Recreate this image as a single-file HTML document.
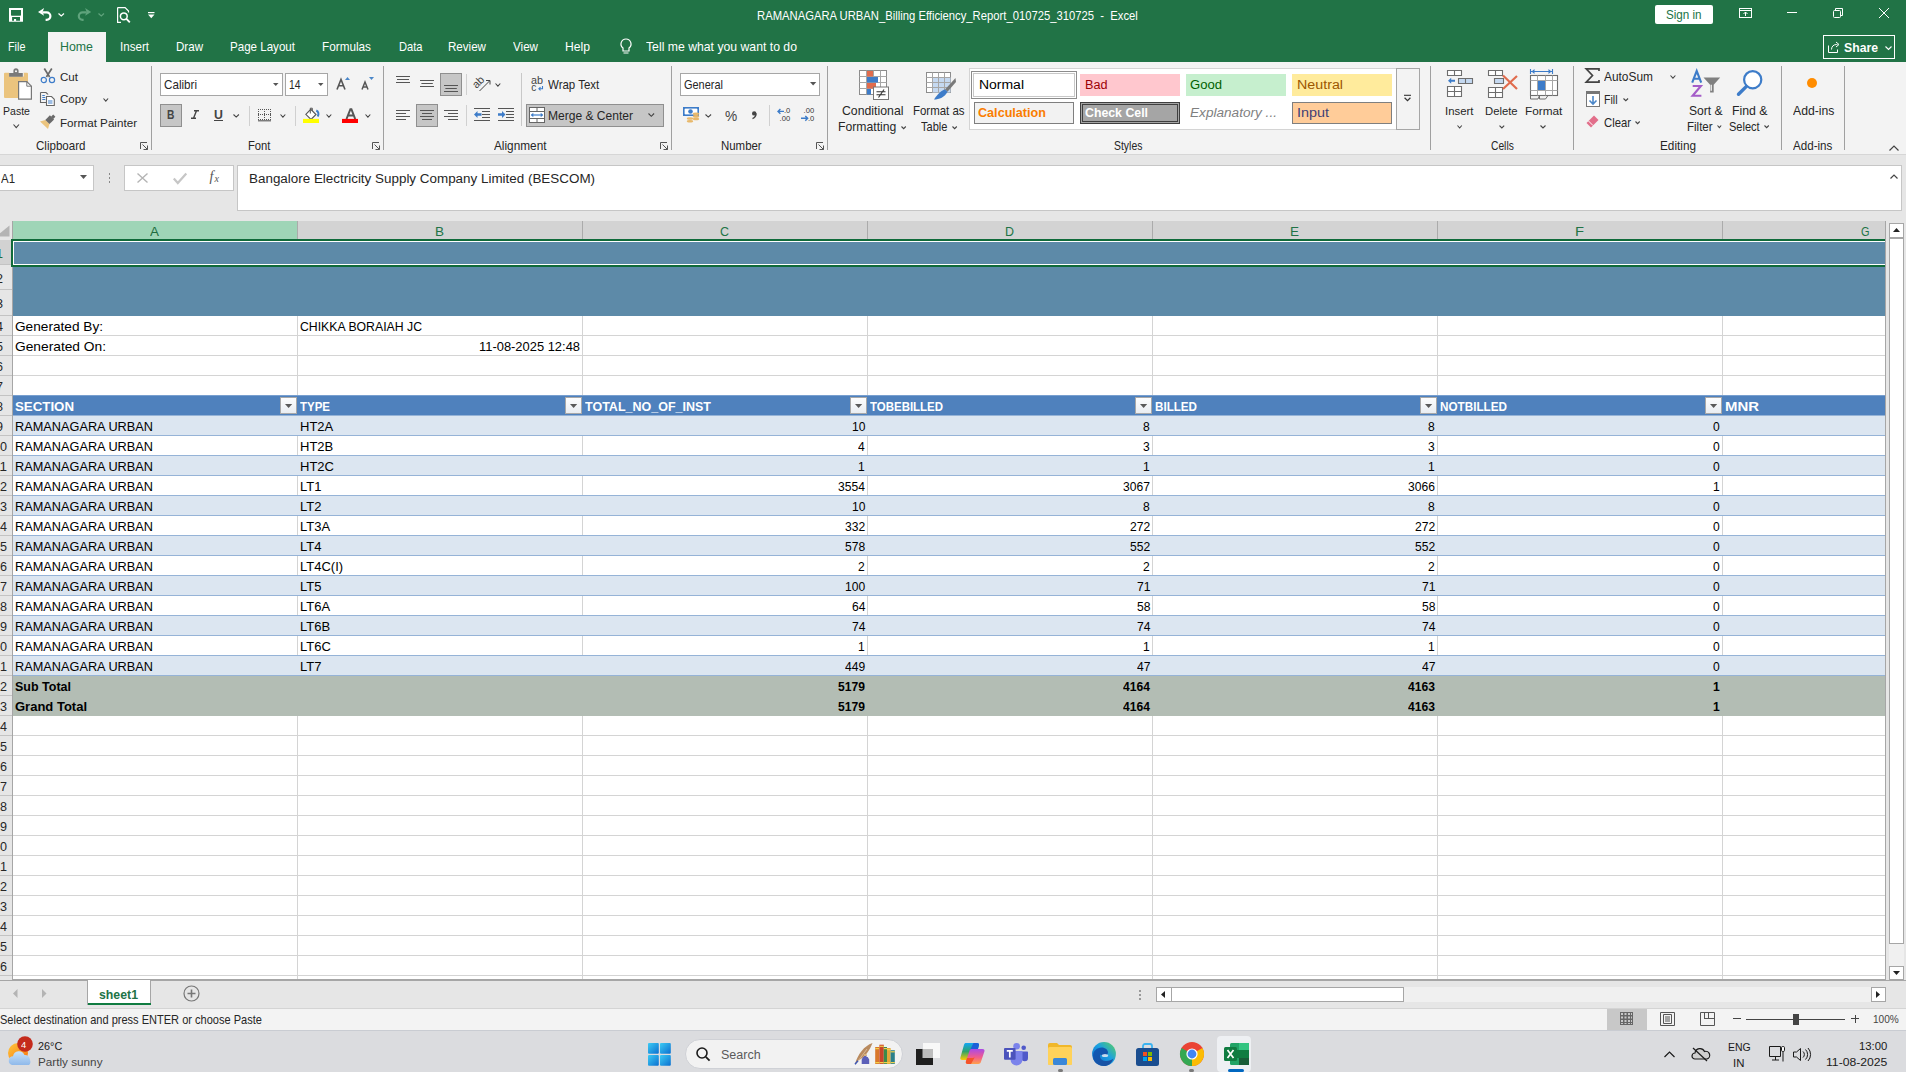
<!DOCTYPE html>
<html><head><meta charset="utf-8"><style>
*{margin:0;padding:0;box-sizing:border-box}
html,body{width:1906px;height:1072px;overflow:hidden;background:#fff;font-family:"Liberation Sans",sans-serif;color:#000}
.a{position:absolute}
.t{position:absolute;white-space:nowrap;line-height:1}
svg{overflow:visible}
</style></head><body>
<div class="a" style="left:0px;top:0px;width:1906px;height:62px;background:#217346;"></div>
<div class="a" style="left:0px;top:62px;width:1906px;height:92px;background:#f3f3f3;"></div>
<div class="a" style="left:0px;top:154px;width:1906px;height:1px;background:#d6d6d6;"></div>
<div class="a" style="left:0px;top:155px;width:1906px;height:66px;background:#e6e6e6;"></div>
<svg class="a" style="left:9px;top:8px;" width="14" height="14" viewBox="0 0 14 14"><path d="M0 0h14v13.8H0z M2 2v4.8c0 0.6 0.4 1 1 1h8c0.6 0 1-0.4 1-1V2z M3.1 9.1v3.6h1.9v-1.6h2.1v1.6h3.9V9.1z" fill="#fff" fill-rule="evenodd"/></svg>
<svg class="a" style="left:37.9px;top:8px;" width="15" height="14" viewBox="0 0 15 14"><path d="M0 4.1L6.1 0L4.6 4.1L6.1 7.8z" fill="#fff"/><path d="M4.5 4.3h4.1a3.8 3.8 0 0 1 0 7.6H7.6" fill="none" stroke="#fff" stroke-width="2.2"/></svg>
<svg class="a" style="left:58.4px;top:13px;" width="6.5" height="3.5" viewBox="0 0 6.5 3.5"><path d="M0.5 0.5L3.25 3L6 0.5" fill="none" stroke="#fff" stroke-width="1.2"/></svg>
<svg class="a" style="left:77px;top:8px;" width="15" height="14" viewBox="0 0 15 14"><path d="M14.2 4.1L8.1 0L9.6 4.1L8.1 7.8z" fill="#5fa37c"/><path d="M9.7 4.3H5.6a3.8 3.8 0 0 0 0 7.6h1" fill="none" stroke="#5fa37c" stroke-width="2.2"/></svg>
<svg class="a" style="left:97.5px;top:13px;" width="6.5" height="3.5" viewBox="0 0 6.5 3.5"><path d="M0.5 0.5L3.25 3L6 0.5" fill="none" stroke="#5fa37c" stroke-width="1.2"/></svg>
<svg class="a" style="left:117px;top:7px;" width="14" height="16" viewBox="0 0 14 16"><path d="M0.6 0.6h7.5l3.4 3.4v1.5 M0.6 0.6v14.8h3.4" fill="none" stroke="#fff" stroke-width="1.2"/><circle cx="6.8" cy="9.3" r="3.4" fill="none" stroke="#fff" stroke-width="1.5"/><path d="M9.2 11.7l3.6 3.6" stroke="#fff" stroke-width="1.9"/></svg>
<svg class="a" style="left:148.3px;top:11.8px;" width="6.5" height="6.5" viewBox="0 0 6.5 6.5"><path d="M0 0.6h6.5" stroke="#fff" stroke-width="1.2"/><path d="M0 2.6h6.5L3.25 6.2z" fill="#fff"/></svg>
<div class="t" style="left:757px;top:11px;font-size:11.85px;color:#fff;font-weight:normal;transform:scaleX(0.9504);transform-origin:0 0;">RAMANAGARA URBAN_Billing Efficiency_Report_010725_310725&nbsp;&nbsp;-&nbsp;&nbsp;Excel</div>
<div class="a" style="left:1655px;top:5px;width:58px;height:19px;background:#fff;border-radius:2px"></div>
<div class="t" style="left:1665.8px;top:9px;font-size:12.85px;color:#217346;font-weight:normal;transform:scaleX(0.9061);transform-origin:0 0;">Sign in</div>
<svg class="a" style="left:1739px;top:8px;" width="13" height="10" viewBox="0 0 13 10"><rect x="0.5" y="0.5" width="12" height="9" fill="none" stroke="#fff"/><path d="M0.5 2.5h12 M6.5 8V4 M4.5 6l2-2 2 2" fill="none" stroke="#fff"/></svg>
<div class="a" style="left:1787px;top:12px;width:10px;height:1px;background:#fff;"></div>
<svg class="a" style="left:1833px;top:8px;" width="10" height="10" viewBox="0 0 10 10"><rect x="0.5" y="2.5" width="7" height="7" rx="1" fill="none" stroke="#fff"/><path d="M2.5 2V0.5h7v7H8" fill="none" stroke="#fff"/></svg>
<svg class="a" style="left:1879px;top:8px;" width="10" height="10" viewBox="0 0 10 10"><path d="M0 0l10 10 M10 0L0 10" stroke="#fff" stroke-width="1"/></svg>
<div class="a" style="left:48px;top:32px;width:58px;height:30px;background:#f3f3f3;"></div>
<div class="t" style="left:7.6px;top:41px;font-size:12.55px;color:#fff;font-weight:normal;transform:scaleX(0.8605);transform-origin:0 0;">File</div>
<div class="t" style="left:60px;top:41px;font-size:12.55px;color:#217346;font-weight:normal;transform:scaleX(0.9858);transform-origin:0 0;">Home</div>
<div class="t" style="left:120px;top:41px;font-size:12.55px;color:#fff;font-weight:normal;transform:scaleX(0.9240);transform-origin:0 0;">Insert</div>
<div class="t" style="left:176px;top:41px;font-size:12.55px;color:#fff;font-weight:normal;transform:scaleX(0.9220);transform-origin:0 0;">Draw</div>
<div class="t" style="left:230px;top:41px;font-size:12.55px;color:#fff;font-weight:normal;transform:scaleX(0.9223);transform-origin:0 0;">Page Layout</div>
<div class="t" style="left:322px;top:41px;font-size:12.55px;color:#fff;font-weight:normal;transform:scaleX(0.9369);transform-origin:0 0;">Formulas</div>
<div class="t" style="left:398.5px;top:41px;font-size:12.55px;color:#fff;font-weight:normal;transform:scaleX(0.8865);transform-origin:0 0;">Data</div>
<div class="t" style="left:448px;top:41px;font-size:12.55px;color:#fff;font-weight:normal;transform:scaleX(0.9235);transform-origin:0 0;">Review</div>
<div class="t" style="left:513px;top:41px;font-size:12.55px;color:#fff;font-weight:normal;transform:scaleX(0.9268);transform-origin:0 0;">View</div>
<div class="t" style="left:565px;top:41px;font-size:12.55px;color:#fff;font-weight:normal;transform:scaleX(0.9686);transform-origin:0 0;">Help</div>
<svg class="a" style="left:620px;top:38px;" width="12" height="17" viewBox="0 0 12 17"><path d="M6 1a5 5 0 0 0-3 9v3h6v-3a5 5 0 0 0-3-9z M3.5 15h5" fill="none" stroke="#fff" stroke-width="1.2"/></svg>
<div class="t" style="left:646px;top:41px;font-size:12.55px;color:#fff;font-weight:normal;transform:scaleX(0.9751);transform-origin:0 0;">Tell me what you want to do</div>
<div class="a" style="left:1823px;top:35px;width:72px;height:24px;border:1px solid #fff"></div>
<svg class="a" style="left:1828px;top:41px;" width="12" height="12" viewBox="0 0 12 12"><path d="M0.5 4.5v7h9v-3 M3.5 8.5c0-3 2-5 5-5h1 M8 1l3 2.5L8 6" fill="none" stroke="#fff" stroke-width="1"/></svg>
<div class="t" style="left:1844px;top:42px;font-size:12.55px;color:#fff;font-weight:bold;transform:scaleX(0.9748);transform-origin:0 0;">Share</div>
<svg class="a" style="left:1884.5px;top:45.5px;" width="7" height="4" viewBox="0 0 7 4"><path d="M0.5 0.5 L3.5 3.5 L6.5 0.5" fill="none" stroke="#fff" stroke-width="1.1"/></svg>
<svg class="a" style="left:0px;top:64px;" width="34" height="38" viewBox="0 0 34 38"><path d="M5 8.8h4v3.8h14.8V8.8H27a1 1 0 0 1 1 1V34H5a1 1 0 0 1-1-1V9.8a1 1 0 0 1 1-1z" fill="#ebc47e"/><path d="M9.1 9.1h4.3V6.8a2.6 2.6 0 0 1 5.2 0v2.3h4.2v3.6H9.1z" fill="#7a7a7a"/><circle cx="16" cy="7.2" r="1" fill="#fff"/><path d="M18.6 17.6h8.2l4.6 4.6v12.9H18.6z" fill="#fff" stroke="#777" stroke-width="1.2"/><path d="M26.8 17.6v4.6h4.6" fill="none" stroke="#777" stroke-width="1"/></svg>
<div class="t" style="left:3px;top:106px;font-size:11.45px;color:#262626;font-weight:normal;transform:scaleX(0.9222);transform-origin:0 0;">Paste</div>
<svg class="a" style="left:12.5px;top:124px;" width="6.5" height="4" viewBox="0 0 6.5 4"><path d="M0.5 0.5 L3.25 3.7 L6.0 0.5" fill="none" stroke="#444" stroke-width="1.1"/></svg>
<svg class="a" style="left:40px;top:67px;" width="16" height="17" viewBox="0 0 16 17"><path d="M4.3 1.5L9.6 10 M11.8 1.5L6.4 10" stroke="#6a6a6a" stroke-width="1.7"/><circle cx="3.8" cy="13" r="2.6" fill="none" stroke="#3d7cc9" stroke-width="1.2"/><circle cx="12" cy="13" r="2.6" fill="none" stroke="#3d7cc9" stroke-width="1.2"/></svg>
<div class="t" style="left:59.7px;top:71px;font-size:11.75px;color:#262626;font-weight:normal;transform:scaleX(0.9845);transform-origin:0 0;">Cut</div>
<svg class="a" style="left:40px;top:92px;" width="16" height="14" viewBox="0 0 16 14"><path d="M0.5 0.5h5.5l1.8 1.8V2.6 M0.5 0.5v10h5.5" fill="none" stroke="#666" stroke-width="1.1"/><path d="M6.5 4.5h5l2.8 2.8v6.2H6.5z" fill="#fff" stroke="#666" stroke-width="1.1"/><path d="M2.3 3.5h2.5 M2.3 5.5h3 M2.3 7.5h3 M8 9h4.5 M8 11h4.5" stroke="#3d7cc9" stroke-width="1"/></svg>
<div class="t" style="left:59.7px;top:93px;font-size:11.75px;color:#262626;font-weight:normal;transform:scaleX(0.9844);transform-origin:0 0;">Copy</div>
<svg class="a" style="left:102.6px;top:98px;" width="5.6" height="3.5" viewBox="0 0 5.6 3.5"><path d="M0.5 0.5 L2.8 3.2 L5.1 0.5" fill="none" stroke="#444" stroke-width="1.1"/></svg>
<svg class="a" style="left:40px;top:114px;" width="17" height="16" viewBox="0 0 17 16"><path d="M0 7.5l5.3-1.6 4.2 4.2L8 15z" fill="#ebc47e"/><path d="M5.3 5.9l4.6-4.6 4.2 4.2-4.6 4.6z" fill="#6a6a6a"/><path d="M11 2.8l2.2-2.2 2.2 2.2-2.2 2.2z" fill="#6a6a6a"/></svg>
<div class="t" style="left:59.7px;top:117px;font-size:11.75px;color:#262626;font-weight:normal;transform:scaleX(0.9910);transform-origin:0 0;">Format Painter</div>
<div class="t" style="left:36px;top:141px;font-size:11.85px;color:#262626;font-weight:normal;transform:scaleX(0.9760);transform-origin:0 0;">Clipboard</div>
<svg class="a" style="left:140px;top:142px;" width="8" height="8" viewBox="0 0 8 8"><path d="M0.5 7V0.5H7 M2.5 2.5L7.5 7.5 M7.5 3.5V7.5H3.5" fill="none" stroke="#555" stroke-width="1"/></svg>
<div class="a" style="left:151px;top:66px;width:1px;height:84px;background:#a0a0a0;"></div>
<div class="a" style="left:160px;top:73px;width:123px;height:23px;background:#fff;border:1px solid #a6a6a6"></div>
<div class="t" style="left:164px;top:80px;font-size:11.85px;color:#262626;font-weight:normal;transform:scaleX(0.9827);transform-origin:0 0;">Calibri</div>
<svg class="a" style="left:273px;top:83px;" width="6" height="3.5" viewBox="0 0 6 3.5"><path d="M0 0h5.5l-2.75 3z" fill="#555"/></svg>
<div class="a" style="left:285px;top:73px;width:43px;height:23px;background:#fff;border:1px solid #a6a6a6"></div>
<div class="t" style="left:288.5px;top:80px;font-size:11.85px;color:#262626;font-weight:normal;transform:scaleX(0.8726);transform-origin:0 0;">14</div>
<svg class="a" style="left:318px;top:83px;" width="6" height="3.5" viewBox="0 0 6 3.5"><path d="M0 0h5.5l-2.75 3z" fill="#555"/></svg>
<svg class="a" style="left:336px;top:77px;" width="14" height="13" viewBox="0 0 14 13"><path d="M1 12.5L5 2.5L9 12.5 M2.6 8.8h4.8" fill="none" stroke="#555" stroke-width="1.6"/><path d="M9 3l2.5-3 2.5 3z" fill="#4a86c8"/></svg>
<svg class="a" style="left:361px;top:77px;" width="13" height="13" viewBox="0 0 13 13"><path d="M1 12.5L4 5L7 12.5 M2.2 10h3.6" fill="none" stroke="#555" stroke-width="1.5"/><path d="M8 0h5l-2.5 3z" fill="#4a86c8"/></svg>
<div class="a" style="left:160px;top:104px;width:22px;height:23px;background:#c6c6c6;border:1px solid #8f8f8f"></div>
<div class="t" style="left:166.5px;top:109px;font-size:12.45px;color:#444;font-weight:bold;transform:scaleX(0.8230);transform-origin:0 0;">B</div>
<svg class="a" style="left:191px;top:110px;" width="8" height="9" viewBox="0 0 8 9"><path d="M3 0.7h5 M0 8.3h5 M5.5 0.7L2.5 8.3" fill="none" stroke="#444" stroke-width="1.4"/></svg>
<div class="t" style="left:214px;top:109px;font-size:12.45px;color:#444;font-weight:bold;transform:scaleX(0.9899);transform-origin:0 0;">U</div>
<div class="a" style="left:214px;top:120px;width:9px;height:1px;background:#444;"></div>
<svg class="a" style="left:233px;top:113.6px;" width="6.4" height="3.4" viewBox="0 0 6.4 3.4"><path d="M0.5 0.5 L3.2 3.1 L5.9 0.5" fill="none" stroke="#444" stroke-width="1.1"/></svg>
<div class="a" style="left:249px;top:105.5px;width:1px;height:20.0px;background:#d0d0d0;"></div>
<svg class="a" style="left:257px;top:108px;" width="15" height="14" viewBox="0 0 15 14"><path d="M1 1.5h13 M1 6.5h13 M1 11.5h13 M1.5 1v11 M7.5 1v11 M13.5 1v11" fill="none" stroke="#555" stroke-width="1" stroke-dasharray="1 1"/><path d="M1 12.8h13" stroke="#555" stroke-width="1.1"/></svg>
<svg class="a" style="left:279.7px;top:113.6px;" width="5.8" height="3.4" viewBox="0 0 5.8 3.4"><path d="M0.5 0.5 L2.9 3.1 L5.3 0.5" fill="none" stroke="#444" stroke-width="1.1"/></svg>
<div class="a" style="left:295px;top:105.5px;width:1px;height:20.0px;background:#d0d0d0;"></div>
<svg class="a" style="left:303px;top:107px;" width="16" height="16" viewBox="0 0 16 16"><path d="M2.8 7.3l5-5 5.2 5.2-5 5z" fill="#fff" stroke="#555" stroke-width="1.1"/><path d="M7.3 6.5V1.2h2v2.6" fill="none" stroke="#555" stroke-width="1"/><path d="M13.3 3.5c2.2 1 2.8 3.5 1.4 6" fill="none" stroke="#3d7cc9" stroke-width="2"/><rect x="0" y="11.9" width="16" height="4.1" fill="#ffff00"/></svg>
<svg class="a" style="left:325.7px;top:113.6px;" width="5.8" height="3.4" viewBox="0 0 5.8 3.4"><path d="M0.5 0.5 L2.9 3.1 L5.3 0.5" fill="none" stroke="#444" stroke-width="1.1"/></svg>
<svg class="a" style="left:342px;top:108px;" width="16" height="15" viewBox="0 0 16 15"><path d="M4.5 11L8.4 1.2h1L13.2 11 M6.2 7.6h5.4" fill="none" stroke="#555" stroke-width="2"/><rect x="0" y="10.9" width="16" height="4.1" fill="#ff0000"/></svg>
<svg class="a" style="left:364.7px;top:113.6px;" width="5.8" height="3.4" viewBox="0 0 5.8 3.4"><path d="M0.5 0.5 L2.9 3.1 L5.3 0.5" fill="none" stroke="#444" stroke-width="1.1"/></svg>
<div class="t" style="left:248px;top:141px;font-size:11.85px;color:#262626;font-weight:normal;transform:scaleX(0.9490);transform-origin:0 0;">Font</div>
<svg class="a" style="left:372px;top:142px;" width="8" height="8" viewBox="0 0 8 8"><path d="M0.5 7V0.5H7 M2.5 2.5L7.5 7.5 M7.5 3.5V7.5H3.5" fill="none" stroke="#555" stroke-width="1"/></svg>
<div class="a" style="left:383px;top:66px;width:1px;height:84px;background:#a0a0a0;"></div>
<svg class="a" style="left:396px;top:76px;" width="15" height="8" viewBox="0 0 15 8"><path d="M0 0.5H14" stroke="#555" stroke-width="1"/><path d="M1 3.5H13" stroke="#555" stroke-width="1"/><path d="M0 6.5H14" stroke="#555" stroke-width="1"/></svg>
<svg class="a" style="left:420px;top:80px;" width="15" height="8" viewBox="0 0 15 8"><path d="M0 0.5H14" stroke="#555" stroke-width="1"/><path d="M1.4 3.5H12.8" stroke="#555" stroke-width="1"/><path d="M0 6.5H14" stroke="#555" stroke-width="1"/></svg>
<div class="a" style="left:440px;top:73px;width:22px;height:23px;background:#c6c6c6;border:1px solid #8f8f8f"></div>
<svg class="a" style="left:444px;top:85px;" width="15" height="8" viewBox="0 0 15 8"><path d="M0 0.5H14" stroke="#555" stroke-width="1"/><path d="M1.4 3.5H12.8" stroke="#555" stroke-width="1"/><path d="M0 6.5H14" stroke="#555" stroke-width="1"/></svg>
<div class="a" style="left:466px;top:74px;width:1px;height:20.5px;background:#d0d0d0;"></div>
<svg class="a" style="left:473px;top:76px;" width="19" height="16" viewBox="0 0 19 16"><text x="0" y="0" font-size="11" fill="#444" font-family="Liberation Sans" transform="translate(3.5 13) rotate(-45)">ab</text><path d="M6.5 15L16.5 5 M13 4.5h4v4" fill="none" stroke="#444" stroke-width="1"/></svg>
<svg class="a" style="left:494.6px;top:83px;" width="5.8" height="3.4" viewBox="0 0 5.8 3.4"><path d="M0.5 0.5 L2.9 3.1 L5.3 0.5" fill="none" stroke="#444" stroke-width="1.1"/></svg>
<div class="a" style="left:521px;top:73px;width:1px;height:53px;background:#c8c8c8;"></div>
<svg class="a" style="left:530.5px;top:76px;" width="14" height="16" viewBox="0 0 14 16"><text x="0" y="7.8" font-size="10" fill="#444" font-family="Liberation Sans" textLength="12" lengthAdjust="spacingAndGlyphs">ab</text><text x="0.3" y="14.6" font-size="10" fill="#444" font-family="Liberation Sans">c</text><path d="M11.5 10v2.8h-3.6 M9.5 11.2l-1.6 1.6 1.6 1.6" fill="none" stroke="#3d7cc9" stroke-width="1.1"/></svg>
<div class="t" style="left:548.3px;top:80px;font-size:11.85px;color:#262626;font-weight:normal;transform:scaleX(0.9697);transform-origin:0 0;">Wrap Text</div>
<svg class="a" style="left:396px;top:110px;" width="15" height="11" viewBox="0 0 15 11"><path d="M0 0.5H14" stroke="#555" stroke-width="1"/><path d="M0 3.5H10" stroke="#555" stroke-width="1"/><path d="M0 6.5H14" stroke="#555" stroke-width="1"/><path d="M0 9.5H10" stroke="#555" stroke-width="1"/></svg>
<div class="a" style="left:416px;top:104px;width:22px;height:23px;background:#c6c6c6;border:1px solid #8f8f8f"></div>
<svg class="a" style="left:420px;top:110px;" width="15" height="11" viewBox="0 0 15 11"><path d="M0 0.5H14" stroke="#555" stroke-width="1"/><path d="M2 3.5H12" stroke="#555" stroke-width="1"/><path d="M0 6.5H14" stroke="#555" stroke-width="1"/><path d="M2 9.5H12" stroke="#555" stroke-width="1"/></svg>
<svg class="a" style="left:444px;top:110px;" width="15" height="11" viewBox="0 0 15 11"><path d="M0 0.5H14" stroke="#555" stroke-width="1"/><path d="M4 3.5H14" stroke="#555" stroke-width="1"/><path d="M0 6.5H14" stroke="#555" stroke-width="1"/><path d="M4 9.5H14" stroke="#555" stroke-width="1"/></svg>
<div class="a" style="left:466px;top:105px;width:1px;height:21px;background:#d0d0d0;"></div>
<svg class="a" style="left:474px;top:108px;" width="17" height="14" viewBox="0 0 17 14"><path d="M0 0.5h16 M8 3.5h8 M8 6.5h8 M8 9.5h8 M0 12.5h16" stroke="#555" stroke-width="1"/><path d="M0 6.5L3.5 3v2.3h4v2.4h-4V10z" fill="#3d7cc9"/></svg>
<svg class="a" style="left:498px;top:108px;" width="17" height="14" viewBox="0 0 17 14"><path d="M0 0.5h16 M8 3.5h8 M8 6.5h8 M8 9.5h8 M0 12.5h16" stroke="#555" stroke-width="1"/><path d="M7.5 6.5L4 3v2.3H0v2.4h4V10z" fill="#3d7cc9"/></svg>
<div class="a" style="left:526px;top:104px;width:138px;height:23px;background:#c6c6c6;border:1px solid #8f8f8f"></div>
<svg class="a" style="left:529px;top:107px;" width="16" height="16" viewBox="0 0 16 16"><rect x="0.5" y="0.5" width="15" height="15" fill="#fff" stroke="#666"/><path d="M0.5 4.5h15 M0.5 11.5h15 M8 0.5v4 M8 11.5v4" stroke="#666"/><path d="M2.5 8h11" stroke="#3d7cc9" stroke-width="1.2"/><path d="M1.8 8l2.5-2.2v4.4z M14.2 8l-2.5-2.2v4.4z" fill="#3d7cc9"/></svg>
<div class="t" style="left:548.3px;top:110px;font-size:12.3px;color:#262626;font-weight:normal;transform:scaleX(0.9791);transform-origin:0 0;">Merge &amp; Center</div>
<svg class="a" style="left:648px;top:113.4px;" width="6.6" height="3.6" viewBox="0 0 6.6 3.6"><path d="M0.5 0.5 L3.3 3.3000000000000003 L6.1 0.5" fill="none" stroke="#444" stroke-width="1.1"/></svg>
<div class="t" style="left:493.5px;top:141px;font-size:11.85px;color:#262626;font-weight:normal;transform:scaleX(0.9964);transform-origin:0 0;">Alignment</div>
<svg class="a" style="left:660px;top:142px;" width="8" height="8" viewBox="0 0 8 8"><path d="M0.5 7V0.5H7 M2.5 2.5L7.5 7.5 M7.5 3.5V7.5H3.5" fill="none" stroke="#555" stroke-width="1"/></svg>
<div class="a" style="left:671px;top:66px;width:1px;height:84px;background:#a0a0a0;"></div>
<div class="a" style="left:680px;top:73px;width:140px;height:23px;background:#fff;border:1px solid #a6a6a6"></div>
<div class="t" style="left:683.5px;top:80px;font-size:11.85px;color:#262626;font-weight:normal;transform:scaleX(0.9252);transform-origin:0 0;">General</div>
<svg class="a" style="left:809.5px;top:82.4px;" width="6.3" height="4" viewBox="0 0 6.3 4"><path d="M0 0h6.3l-3.15 3.5z" fill="#555"/></svg>
<svg class="a" style="left:683px;top:107px;" width="17" height="16" viewBox="0 0 17 16"><rect x="0.8" y="0.8" width="14.4" height="7.4" fill="#fff" stroke="#3d7cc9" stroke-width="1.6"/><path d="M0 0h3.5L0 3z M16 0h-3.5L16 3z M0 9h3.5L0 6z" fill="#3d7cc9"/><circle cx="7.5" cy="4.5" r="2.3" fill="#3d7cc9"/><ellipse cx="13" cy="6.8" rx="3.2" ry="1.3" fill="#e8b86a"/><ellipse cx="13" cy="9.4" rx="3.2" ry="1.3" fill="#e8b86a"/><ellipse cx="13" cy="12" rx="3.2" ry="1.3" fill="#e8b86a"/><ellipse cx="7" cy="11.5" rx="3.2" ry="1.3" fill="#e8b86a"/><ellipse cx="7" cy="14.2" rx="3.2" ry="1.3" fill="#e8b86a"/></svg>
<svg class="a" style="left:705.4px;top:113.6px;" width="6.6" height="3.4" viewBox="0 0 6.6 3.4"><path d="M0.5 0.5 L3.3 3.1 L6.1 0.5" fill="none" stroke="#444" stroke-width="1.1"/></svg>
<div class="t" style="left:724.6px;top:109px;font-size:14.65px;color:#444;font-weight:normal;transform:scaleX(0.9365);transform-origin:0 0;">%</div>
<svg class="a" style="left:751px;top:111px;" width="6" height="8" viewBox="0 0 6 8"><circle cx="3.2" cy="2.4" r="2.2" fill="#444"/><path d="M5 2.6c0 2.5-1.5 4.3-3.5 5" fill="none" stroke="#444" stroke-width="1.5"/></svg>
<div class="a" style="left:769px;top:105px;width:1px;height:21px;background:#d0d0d0;"></div>
<svg class="a" style="left:777px;top:107px;" width="16" height="15" viewBox="0 0 16 15"><text x="7" y="6.4" font-size="7.6" fill="#333" font-family="Liberation Sans">.0</text><text x="2.6" y="13.7" font-size="7.6" fill="#333" font-family="Liberation Sans">.00</text><path d="M1 4.4h6 M3.4 2L1 4.4l2.4 2.4" fill="none" stroke="#3d7cc9" stroke-width="1.4"/></svg>
<svg class="a" style="left:801px;top:107px;" width="16" height="15" viewBox="0 0 16 15"><text x="2.6" y="6.4" font-size="7.6" fill="#333" font-family="Liberation Sans">.00</text><text x="7" y="13.7" font-size="7.6" fill="#333" font-family="Liberation Sans">.0</text><path d="M0 11.3h6.5 M4.3 8.9l2.4 2.4-2.4 2.4" fill="none" stroke="#3d7cc9" stroke-width="1.4"/></svg>
<div class="t" style="left:721.3px;top:141px;font-size:11.85px;color:#262626;font-weight:normal;transform:scaleX(0.9657);transform-origin:0 0;">Number</div>
<svg class="a" style="left:816px;top:142px;" width="8" height="8" viewBox="0 0 8 8"><path d="M0.5 7V0.5H7 M2.5 2.5L7.5 7.5 M7.5 3.5V7.5H3.5" fill="none" stroke="#555" stroke-width="1"/></svg>
<div class="a" style="left:827px;top:66px;width:1px;height:84px;background:#a0a0a0;"></div>
<svg class="a" style="left:859px;top:70px;" width="31" height="30" viewBox="0 0 31 30"><rect x="0.5" y="0.5" width="27" height="24" fill="#fff" stroke="#8c8c8c"/><path d="M0.5 6.5h27 M0.5 12.5h27 M0.5 18.5h27 M7.5 0.5v24 M14.5 0.5v24 M21.5 0.5v24" stroke="#a6a6a6"/><rect x="8" y="1" width="6" height="5.5" fill="#e06c4e"/><rect x="8" y="7" width="11" height="5.5" fill="#3d7cc9"/><rect x="8" y="13" width="9" height="5.5" fill="#e06c4e"/><rect x="8" y="19" width="4" height="5.5" fill="#3d7cc9"/><rect x="14.5" y="17" width="15" height="12.5" fill="#fff" stroke="#777"/><path d="M17.5 21.8h9 M17.5 24.8h9 M25 19.5l-5.5 8" stroke="#333" stroke-width="1.1"/></svg>
<div class="t" style="left:842px;top:106px;font-size:11.85px;color:#262626;font-weight:normal;transform:scaleX(1.0373);transform-origin:0 0;">Conditional</div>
<div class="t" style="left:838.4px;top:122px;font-size:11.85px;color:#262626;font-weight:normal;transform:scaleX(1.0313);transform-origin:0 0;">Formatting</div>
<svg class="a" style="left:901px;top:125.5px;" width="5.3" height="3" viewBox="0 0 5.3 3"><path d="M0.5 0.5 L2.65 2.7 L4.8 0.5" fill="none" stroke="#444" stroke-width="1.1"/></svg>
<svg class="a" style="left:926px;top:72px;" width="31" height="29" viewBox="0 0 31 29"><rect x="0.5" y="0.5" width="24" height="20" fill="#fff" stroke="#8c8c8c"/><rect x="6.5" y="5.5" width="18" height="15" fill="#c5d9f1"/><path d="M0.5 5.5h24 M0.5 10.5h24 M0.5 15.5h24 M6.5 0.5v20 M12.5 0.5v20 M18.5 0.5v20" stroke="#a6a6a6"/><path d="M29.5 6L19 17.5l2.5 2.2L30 10z" fill="#7a7a7a"/><path d="M19 17.5c-3 0.5-7 4-11 10c5 0 11-2.5 13.5-7.8z" fill="#3d7cc9"/></svg>
<div class="t" style="left:913.2px;top:106px;font-size:11.85px;color:#262626;font-weight:normal;transform:scaleX(0.9675);transform-origin:0 0;">Format as</div>
<div class="t" style="left:920.8px;top:122px;font-size:11.85px;color:#262626;font-weight:normal;transform:scaleX(0.9320);transform-origin:0 0;">Table</div>
<svg class="a" style="left:952px;top:125.5px;" width="5.3" height="3" viewBox="0 0 5.3 3"><path d="M0.5 0.5 L2.65 2.7 L4.8 0.5" fill="none" stroke="#444" stroke-width="1.1"/></svg>
<div class="a" style="left:969px;top:68px;width:428px;height:62px;background:#fff;border:1px solid #d4d4d4"></div>
<div class="a" style="left:971px;top:71px;width:106px;height:28px;background:#fff;border:1px solid #8c8c8c;box-shadow:inset 0 0 0 1px #fff, inset 0 0 0 2px #c8c8c8"></div>
<div class="t" style="left:978.7px;top:79px;font-size:12.85px;color:#000;font-weight:normal;transform:scaleX(1.0867);transform-origin:0 0;">Normal</div>
<div class="a" style="left:1080px;top:74px;width:100px;height:22px;background:#ffc7ce;"></div>
<div class="t" style="left:1084.5px;top:79px;font-size:12.85px;color:#9c0006;font-weight:normal;transform:scaleX(0.9841);transform-origin:0 0;">Bad</div>
<div class="a" style="left:1186px;top:74px;width:100px;height:22px;background:#c6efce;"></div>
<div class="t" style="left:1190.3px;top:79px;font-size:12.85px;color:#006100;font-weight:normal;transform:scaleX(1.0181);transform-origin:0 0;">Good</div>
<div class="a" style="left:1292px;top:74px;width:100px;height:22px;background:#ffeb9c;"></div>
<div class="t" style="left:1296.5px;top:79px;font-size:12.85px;color:#9c5700;font-weight:normal;transform:scaleX(1.1105);transform-origin:0 0;">Neutral</div>
<div class="a" style="left:974px;top:102px;width:100px;height:22px;background:#f2f2f2;border:1px solid #7f7f7f"></div>
<div class="t" style="left:978.2px;top:107px;font-size:12.85px;color:#fa7d00;font-weight:bold;transform:scaleX(0.9819);transform-origin:0 0;">Calculation</div>
<div class="a" style="left:1080px;top:102px;width:100px;height:22px;background:#a5a5a5;border:3px double #3f3f3f"></div>
<div class="t" style="left:1084.5px;top:107px;font-size:12.85px;color:#fff;font-weight:bold;transform:scaleX(0.9589);transform-origin:0 0;">Check Cell</div>
<div class="t" style="left:1190.3px;top:107px;font-size:12.85px;color:#7f7f7f;font-weight:normal;transform:scaleX(1.0592);transform-origin:0 0;font-style:italic;">Explanatory ...</div>
<div class="a" style="left:1292px;top:102px;width:100px;height:22px;background:#ffcc99;border:1px solid #7f7f7f"></div>
<div class="t" style="left:1296.5px;top:107px;font-size:12.85px;color:#3f3f76;font-weight:normal;transform:scaleX(1.1198);transform-origin:0 0;">Input</div>
<div class="a" style="left:1396px;top:68px;width:24px;height:62px;background:#f3f3f3;border:1px solid #a6a6a6"></div>
<svg class="a" style="left:1404px;top:94px;" width="8" height="8" viewBox="0 0 8 8"><path d="M0 1.3h7" stroke="#333" stroke-width="1.1"/><path d="M0.6 3.8L3.5 6.6L6.4 3.8" fill="none" stroke="#333" stroke-width="1.2"/></svg>
<div class="t" style="left:1114px;top:141px;font-size:11.85px;color:#262626;font-weight:normal;transform:scaleX(0.8801);transform-origin:0 0;">Styles</div>
<div class="a" style="left:1430px;top:66px;width:1px;height:84px;background:#a0a0a0;"></div>
<svg class="a" style="left:1440px;top:64px;" width="40" height="40" viewBox="0 0 40 40"><path d="M7.5 6.5h14v5h-14z M14.5 6.5v5 M7.5 22.5h14v10h-14z M14.5 22.5v10 M7.5 27.5h14" fill="#fff" stroke="#6e6e6e" stroke-width="1.1"/><path d="M18.5 14.5h14v5h-14z" fill="#c5d9f1" stroke="#6e6e6e" stroke-width="1.1"/><path d="M25.5 14.5v5" stroke="#6e6e6e" stroke-width="1.1"/><path d="M8 16.8l3.2-3v2h3.8v2h-3.8v2z" fill="#3d7cc9"/></svg>
<svg class="a" style="left:1480px;top:64px;" width="40" height="40" viewBox="0 0 40 40"><path d="M8.5 6.5h14v5h-14z M15.5 6.5v5 M8.5 23.5h14v10h-14z M15.5 23.5v10 M8.5 28.5h14" fill="#fff" stroke="#6e6e6e" stroke-width="1.1"/><path d="M14.5 14.5h9v5h-9z" fill="#c5d9f1" stroke="#6e6e6e" stroke-width="1.1"/><path d="M23 11.5l14 13.5 M37 12l-14 13" stroke="#e06c4e" stroke-width="2.2"/></svg>
<svg class="a" style="left:1520px;top:64px;" width="40" height="40" viewBox="0 0 40 40"><path d="M10.5 5v5 M32.5 5v5 M11 7.5h21" fill="none" stroke="#3d7cc9" stroke-width="1.1"/><path d="M11.5 7.5l3-2.5v5z M31.5 7.5l-3-2.5v5z" fill="#3d7cc9"/><rect x="10.5" y="11.5" width="27" height="20" fill="#fff" stroke="#6e6e6e" stroke-width="1.1"/><path d="M10.5 16.5h27 M10.5 26.5h27 M17.5 11.5v20 M25.5 11.5v20 M32.5 11.5v20" stroke="#a6a6a6" stroke-width="1"/><rect x="18" y="17" width="7" height="9" fill="#3d7cc9"/><path d="M10.5 31.5v3.5h7.5l1.5-3.5 M19.5 31.5v3.5h6l2.5-3.5" fill="none" stroke="#6e6e6e" stroke-width="1"/></svg>
<div class="t" style="left:1445.3px;top:105px;font-size:11.6px;color:#262626;font-weight:normal;transform:scaleX(0.9790);transform-origin:0 0;">Insert</div>
<svg class="a" style="left:1456.7px;top:124.6px;" width="5.3" height="3.3" viewBox="0 0 5.3 3.3"><path d="M0.5 0.5 L2.65 3.0 L4.8 0.5" fill="none" stroke="#444" stroke-width="1.1"/></svg>
<div class="t" style="left:1485px;top:105px;font-size:11.6px;color:#262626;font-weight:normal;transform:scaleX(0.9723);transform-origin:0 0;">Delete</div>
<svg class="a" style="left:1498.6px;top:124.6px;" width="5.7" height="3.3" viewBox="0 0 5.7 3.3"><path d="M0.5 0.5 L2.85 3.0 L5.2 0.5" fill="none" stroke="#444" stroke-width="1.1"/></svg>
<div class="t" style="left:1525.4px;top:105px;font-size:11.6px;color:#262626;font-weight:normal;transform:scaleX(1.0181);transform-origin:0 0;">Format</div>
<svg class="a" style="left:1540.4px;top:124.6px;" width="6" height="3.3" viewBox="0 0 6 3.3"><path d="M0.5 0.5 L3.0 3.0 L5.5 0.5" fill="none" stroke="#444" stroke-width="1.1"/></svg>
<div class="t" style="left:1490.5px;top:141px;font-size:11.85px;color:#262626;font-weight:normal;transform:scaleX(0.8657);transform-origin:0 0;">Cells</div>
<div class="a" style="left:1573px;top:66px;width:1px;height:84px;background:#a0a0a0;"></div>
<svg class="a" style="left:1585px;top:68px;" width="15" height="15" viewBox="0 0 15 15"><path d="M14 3V0.8H1.2L7.5 7.5L1.2 14.2H14V12" fill="none" stroke="#444" stroke-width="1.7"/></svg>
<div class="t" style="left:1604.4px;top:72px;font-size:11.85px;color:#262626;font-weight:normal;transform:scaleX(1.0053);transform-origin:0 0;">AutoSum</div>
<svg class="a" style="left:1669.6px;top:74.7px;" width="5.9" height="3.5" viewBox="0 0 5.9 3.5"><path d="M0.5 0.5 L2.95 3.2 L5.4 0.5" fill="none" stroke="#444" stroke-width="1.1"/></svg>
<svg class="a" style="left:1586px;top:91px;" width="14" height="16" viewBox="0 0 14 16"><rect x="0.5" y="0.5" width="13" height="15" fill="#fff" stroke="#777"/><rect x="0" y="0" width="14" height="3" fill="#777"/><path d="M7 5v8 M3.5 9.5L7 13l3.5-3.5" fill="none" stroke="#4a86c8" stroke-width="1.6"/></svg>
<div class="t" style="left:1604.4px;top:95px;font-size:11.85px;color:#262626;font-weight:normal;transform:scaleX(0.8985);transform-origin:0 0;">Fill</div>
<svg class="a" style="left:1622.6px;top:98px;" width="5.6" height="3" viewBox="0 0 5.6 3"><path d="M0.5 0.5 L2.8 2.7 L5.1 0.5" fill="none" stroke="#444" stroke-width="1.1"/></svg>
<svg class="a" style="left:1586px;top:115px;" width="13" height="13" viewBox="0 0 13 13"><path d="M5 12.5L0.5 8 8 0.5 12.5 5z" fill="#e26e8a"/><path d="M2.5 6l4.5 4.5" stroke="#fff" stroke-width="1"/></svg>
<div class="t" style="left:1604.4px;top:118px;font-size:11.85px;color:#262626;font-weight:normal;transform:scaleX(0.9535);transform-origin:0 0;">Clear</div>
<svg class="a" style="left:1635px;top:121px;" width="5.2" height="3" viewBox="0 0 5.2 3"><path d="M0.5 0.5 L2.6 2.7 L4.7 0.5" fill="none" stroke="#444" stroke-width="1.1"/></svg>
<svg class="a" style="left:1690px;top:70px;" width="32" height="28" viewBox="0 0 32 28"><path d="M2.2 12.6L6.7 1L11.2 12.6 M3.8 8.8h5.8" fill="none" stroke="#3d7cc9" stroke-width="2.1"/><path d="M2.7 16h8.2L2.6 25.8h8.8" fill="none" stroke="#a45cc8" stroke-width="2.1"/><path d="M13.5 7.6h16.7l-6.5 7.2v7.6h-3.6v-7.6z" fill="#808080"/><path d="M21.2 14.8v6" stroke="#fff" stroke-width="1.2"/></svg>
<div class="t" style="left:1689px;top:106px;font-size:11.85px;color:#262626;font-weight:normal;transform:scaleX(1.0204);transform-origin:0 0;">Sort &amp;</div>
<div class="t" style="left:1687.3px;top:122px;font-size:11.85px;color:#262626;font-weight:normal;transform:scaleX(0.9722);transform-origin:0 0;">Filter</div>
<svg class="a" style="left:1717.3px;top:125px;" width="4.7" height="3" viewBox="0 0 4.7 3"><path d="M0.5 0.5 L2.35 2.7 L4.2 0.5" fill="none" stroke="#444" stroke-width="1.1"/></svg>
<svg class="a" style="left:1736px;top:69px;" width="28" height="28" viewBox="0 0 28 28"><circle cx="16.7" cy="10.7" r="8.6" fill="#fff" stroke="#3d7cc9" stroke-width="2.2"/><path d="M10.2 17.6L2.5 25.3" stroke="#3d7cc9" stroke-width="3.4" stroke-linecap="round"/></svg>
<div class="t" style="left:1732.3px;top:106px;font-size:11.85px;color:#262626;font-weight:normal;transform:scaleX(1.0395);transform-origin:0 0;">Find &amp;</div>
<div class="t" style="left:1729.3px;top:122px;font-size:11.85px;color:#262626;font-weight:normal;transform:scaleX(0.9322);transform-origin:0 0;">Select</div>
<svg class="a" style="left:1764px;top:125px;" width="5.3" height="3" viewBox="0 0 5.3 3"><path d="M0.5 0.5 L2.65 2.7 L4.8 0.5" fill="none" stroke="#444" stroke-width="1.1"/></svg>
<div class="t" style="left:1659.6px;top:141px;font-size:11.85px;color:#262626;font-weight:normal;transform:scaleX(0.9936);transform-origin:0 0;">Editing</div>
<div class="a" style="left:1781px;top:66px;width:1px;height:84px;background:#a0a0a0;"></div>
<svg class="a" style="left:1806px;top:77px;" width="12" height="12" viewBox="0 0 12 12"><circle cx="6" cy="6" r="5" fill="#ff8c00"/></svg>
<div class="t" style="left:1792.6px;top:106px;font-size:11.85px;color:#262626;font-weight:normal;transform:scaleX(1.0304);transform-origin:0 0;">Add-ins</div>
<div class="t" style="left:1793px;top:141px;font-size:11.85px;color:#262626;font-weight:normal;transform:scaleX(0.9807);transform-origin:0 0;">Add-ins</div>
<div class="a" style="left:1844px;top:66px;width:1px;height:84px;background:#a0a0a0;"></div>
<svg class="a" style="left:1889px;top:145px;" width="10" height="6" viewBox="0 0 10 6"><path d="M0.5 5.5L5 1l4.5 4.5" fill="none" stroke="#444" stroke-width="1.2"/></svg>
<div class="a" style="left:-2px;top:165px;width:96px;height:26px;background:#fff;border:1px solid #c6c6c6"></div>
<div class="t" style="left:0.5px;top:173px;font-size:12.0px;color:#262626;font-weight:normal;transform:scaleX(0.9538);transform-origin:0 0;">A1</div>
<svg class="a" style="left:80px;top:175.2px;" width="7" height="4" viewBox="0 0 7 4"><path d="M0 0h7l-3.5 4z" fill="#555"/></svg>
<div class="a" style="left:108.5px;top:173px;width:1.6px;height:1.6px;background:#888;"></div>
<div class="a" style="left:108.5px;top:177px;width:1.6px;height:1.6px;background:#888;"></div>
<div class="a" style="left:108.5px;top:181px;width:1.6px;height:1.6px;background:#888;"></div>
<div class="a" style="left:124px;top:165px;width:110px;height:26px;background:#fff;border:1px solid #c6c6c6"></div>
<svg class="a" style="left:137.4px;top:173.3px;" width="11" height="10" viewBox="0 0 11 10"><path d="M0.5 0.5l10 9 M10.5 0.5l-10 9" stroke="#b4b4b4" stroke-width="1.4"/></svg>
<svg class="a" style="left:172.8px;top:172.8px;" width="14" height="11" viewBox="0 0 14 11"><path d="M0.8 5.5l4 4.5 8.5-9.5" fill="none" stroke="#c6c6c6" stroke-width="2.2"/></svg>
<svg class="a" style="left:208px;top:171px;" width="15" height="14" viewBox="0 0 15 14"><text x="1.5" y="10" font-size="14" font-style="italic" font-family="Liberation Serif" fill="#555">f</text><text x="6.5" y="10.5" font-size="10" font-style="italic" font-family="Liberation Serif" fill="#555">x</text></svg>
<div class="a" style="left:237px;top:165px;width:1665px;height:46px;background:#fff;border:1px solid #c6c6c6"></div>
<div class="t" style="left:249px;top:173px;font-size:12.0px;color:#262626;font-weight:normal;transform:scaleX(1.1182);transform-origin:0 0;">Bangalore Electricity Supply Company Limited (BESCOM)</div>
<svg class="a" style="left:1890px;top:174.4px;" width="8" height="5" viewBox="0 0 8 5"><path d="M0.5 4.5L4 1l3.5 3.5" fill="none" stroke="#444" stroke-width="1.2"/></svg>
<div class="a" style="left:0px;top:221px;width:1886px;height:18px;background:#e6e6e6;"></div>
<div class="a" style="left:12px;top:221px;width:1874px;height:18px;background:#d3d3d3;"></div>
<div class="a" style="left:12px;top:221px;width:285px;height:18px;background:#9fd5b7;"></div>
<div class="a" style="left:297px;top:221px;width:1px;height:18px;background:#ababab;"></div>
<div class="a" style="left:582px;top:221px;width:1px;height:18px;background:#ababab;"></div>
<div class="a" style="left:867px;top:221px;width:1px;height:18px;background:#ababab;"></div>
<div class="a" style="left:1152px;top:221px;width:1px;height:18px;background:#ababab;"></div>
<div class="a" style="left:1437px;top:221px;width:1px;height:18px;background:#ababab;"></div>
<div class="a" style="left:1722px;top:221px;width:1px;height:18px;background:#ababab;"></div>
<div class="a" style="left:12px;top:239px;width:1874px;height:2px;background:#106b3a;"></div>
<div class="t" style="left:150.0px;top:226px;font-size:12.55px;color:#1e6b40;font-weight:normal;transform:scaleX(1.0751);transform-origin:0 0;">A</div>
<div class="t" style="left:435.0px;top:226px;font-size:12.55px;color:#217346;font-weight:normal;transform:scaleX(1.0751);transform-origin:0 0;">B</div>
<div class="t" style="left:720.0px;top:226px;font-size:12.55px;color:#217346;font-weight:normal;transform:scaleX(0.9930);transform-origin:0 0;">C</div>
<div class="t" style="left:1005.0px;top:226px;font-size:12.55px;color:#217346;font-weight:normal;transform:scaleX(0.9930);transform-origin:0 0;">D</div>
<div class="t" style="left:1290.0px;top:226px;font-size:12.55px;color:#217346;font-weight:normal;transform:scaleX(1.0751);transform-origin:0 0;">E</div>
<div class="t" style="left:1575.0px;top:226px;font-size:12.55px;color:#217346;font-weight:normal;transform:scaleX(1.1741);transform-origin:0 0;">F</div>
<div class="t" style="left:1860.5px;top:226px;font-size:12.55px;color:#217346;font-weight:normal;transform:scaleX(0.8708);transform-origin:0 0;">G</div>
<svg class="a" style="left:0px;top:225px;" width="10" height="12" viewBox="0 0 10 12"><path d="M9.5 0.5V11.5H-4z" fill="#b4b4b4"/></svg>
<div class="a" style="left:12px;top:221px;width:1px;height:18px;background:#ababab;"></div>
<div class="a" style="left:0px;top:239px;width:12px;height:741px;background:#e6e6e6;"></div>
<div class="a" style="left:0px;top:240px;width:12px;height:25px;background:#d2d2d2;"></div>
<div class="a" style="left:12px;top:221px;width:1px;height:759px;background:#a6a6a6;"></div>
<div class="a" style="left:13px;top:241px;width:1873px;height:739px;background:#fff;"></div>
<div class="a" style="left:13px;top:335px;width:1873px;height:1px;background:#d4d4d4;"></div>
<div class="a" style="left:13px;top:355px;width:1873px;height:1px;background:#d4d4d4;"></div>
<div class="a" style="left:13px;top:375px;width:1873px;height:1px;background:#d4d4d4;"></div>
<div class="a" style="left:13px;top:395px;width:1873px;height:1px;background:#d4d4d4;"></div>
<div class="a" style="left:13px;top:415px;width:1873px;height:1px;background:#d4d4d4;"></div>
<div class="a" style="left:13px;top:435px;width:1873px;height:1px;background:#d4d4d4;"></div>
<div class="a" style="left:13px;top:455px;width:1873px;height:1px;background:#d4d4d4;"></div>
<div class="a" style="left:13px;top:475px;width:1873px;height:1px;background:#d4d4d4;"></div>
<div class="a" style="left:13px;top:495px;width:1873px;height:1px;background:#d4d4d4;"></div>
<div class="a" style="left:13px;top:515px;width:1873px;height:1px;background:#d4d4d4;"></div>
<div class="a" style="left:13px;top:535px;width:1873px;height:1px;background:#d4d4d4;"></div>
<div class="a" style="left:13px;top:555px;width:1873px;height:1px;background:#d4d4d4;"></div>
<div class="a" style="left:13px;top:575px;width:1873px;height:1px;background:#d4d4d4;"></div>
<div class="a" style="left:13px;top:595px;width:1873px;height:1px;background:#d4d4d4;"></div>
<div class="a" style="left:13px;top:615px;width:1873px;height:1px;background:#d4d4d4;"></div>
<div class="a" style="left:13px;top:635px;width:1873px;height:1px;background:#d4d4d4;"></div>
<div class="a" style="left:13px;top:655px;width:1873px;height:1px;background:#d4d4d4;"></div>
<div class="a" style="left:13px;top:675px;width:1873px;height:1px;background:#d4d4d4;"></div>
<div class="a" style="left:13px;top:695px;width:1873px;height:1px;background:#d4d4d4;"></div>
<div class="a" style="left:13px;top:715px;width:1873px;height:1px;background:#d4d4d4;"></div>
<div class="a" style="left:13px;top:735px;width:1873px;height:1px;background:#d4d4d4;"></div>
<div class="a" style="left:13px;top:755px;width:1873px;height:1px;background:#d4d4d4;"></div>
<div class="a" style="left:13px;top:775px;width:1873px;height:1px;background:#d4d4d4;"></div>
<div class="a" style="left:13px;top:795px;width:1873px;height:1px;background:#d4d4d4;"></div>
<div class="a" style="left:13px;top:815px;width:1873px;height:1px;background:#d4d4d4;"></div>
<div class="a" style="left:13px;top:835px;width:1873px;height:1px;background:#d4d4d4;"></div>
<div class="a" style="left:13px;top:855px;width:1873px;height:1px;background:#d4d4d4;"></div>
<div class="a" style="left:13px;top:875px;width:1873px;height:1px;background:#d4d4d4;"></div>
<div class="a" style="left:13px;top:895px;width:1873px;height:1px;background:#d4d4d4;"></div>
<div class="a" style="left:13px;top:915px;width:1873px;height:1px;background:#d4d4d4;"></div>
<div class="a" style="left:13px;top:935px;width:1873px;height:1px;background:#d4d4d4;"></div>
<div class="a" style="left:13px;top:955px;width:1873px;height:1px;background:#d4d4d4;"></div>
<div class="a" style="left:13px;top:975px;width:1873px;height:1px;background:#d4d4d4;"></div>
<div class="a" style="left:297px;top:316px;width:1px;height:664px;background:#d4d4d4;"></div>
<div class="a" style="left:582px;top:316px;width:1px;height:664px;background:#d4d4d4;"></div>
<div class="a" style="left:867px;top:316px;width:1px;height:664px;background:#d4d4d4;"></div>
<div class="a" style="left:1152px;top:316px;width:1px;height:664px;background:#d4d4d4;"></div>
<div class="a" style="left:1437px;top:316px;width:1px;height:664px;background:#d4d4d4;"></div>
<div class="a" style="left:1722px;top:316px;width:1px;height:664px;background:#d4d4d4;"></div>
<div class="a" style="left:0px;top:264px;width:12px;height:1px;background:#c3c3c3;"></div>
<div class="a" style="left:0px;top:289px;width:12px;height:1px;background:#c3c3c3;"></div>
<div class="a" style="left:0px;top:315px;width:12px;height:1px;background:#c3c3c3;"></div>
<div class="a" style="left:0px;top:335px;width:12px;height:1px;background:#c3c3c3;"></div>
<div class="a" style="left:0px;top:355px;width:12px;height:1px;background:#c3c3c3;"></div>
<div class="a" style="left:0px;top:375px;width:12px;height:1px;background:#c3c3c3;"></div>
<div class="a" style="left:0px;top:395px;width:12px;height:1px;background:#c3c3c3;"></div>
<div class="a" style="left:0px;top:415px;width:12px;height:1px;background:#c3c3c3;"></div>
<div class="a" style="left:0px;top:435px;width:12px;height:1px;background:#c3c3c3;"></div>
<div class="a" style="left:0px;top:455px;width:12px;height:1px;background:#c3c3c3;"></div>
<div class="a" style="left:0px;top:475px;width:12px;height:1px;background:#c3c3c3;"></div>
<div class="a" style="left:0px;top:495px;width:12px;height:1px;background:#c3c3c3;"></div>
<div class="a" style="left:0px;top:515px;width:12px;height:1px;background:#c3c3c3;"></div>
<div class="a" style="left:0px;top:535px;width:12px;height:1px;background:#c3c3c3;"></div>
<div class="a" style="left:0px;top:555px;width:12px;height:1px;background:#c3c3c3;"></div>
<div class="a" style="left:0px;top:575px;width:12px;height:1px;background:#c3c3c3;"></div>
<div class="a" style="left:0px;top:595px;width:12px;height:1px;background:#c3c3c3;"></div>
<div class="a" style="left:0px;top:615px;width:12px;height:1px;background:#c3c3c3;"></div>
<div class="a" style="left:0px;top:635px;width:12px;height:1px;background:#c3c3c3;"></div>
<div class="a" style="left:0px;top:655px;width:12px;height:1px;background:#c3c3c3;"></div>
<div class="a" style="left:0px;top:675px;width:12px;height:1px;background:#c3c3c3;"></div>
<div class="a" style="left:0px;top:695px;width:12px;height:1px;background:#c3c3c3;"></div>
<div class="a" style="left:0px;top:715px;width:12px;height:1px;background:#c3c3c3;"></div>
<div class="a" style="left:0px;top:735px;width:12px;height:1px;background:#c3c3c3;"></div>
<div class="a" style="left:0px;top:755px;width:12px;height:1px;background:#c3c3c3;"></div>
<div class="a" style="left:0px;top:775px;width:12px;height:1px;background:#c3c3c3;"></div>
<div class="a" style="left:0px;top:795px;width:12px;height:1px;background:#c3c3c3;"></div>
<div class="a" style="left:0px;top:815px;width:12px;height:1px;background:#c3c3c3;"></div>
<div class="a" style="left:0px;top:835px;width:12px;height:1px;background:#c3c3c3;"></div>
<div class="a" style="left:0px;top:855px;width:12px;height:1px;background:#c3c3c3;"></div>
<div class="a" style="left:0px;top:875px;width:12px;height:1px;background:#c3c3c3;"></div>
<div class="a" style="left:0px;top:895px;width:12px;height:1px;background:#c3c3c3;"></div>
<div class="a" style="left:0px;top:915px;width:12px;height:1px;background:#c3c3c3;"></div>
<div class="a" style="left:0px;top:935px;width:12px;height:1px;background:#c3c3c3;"></div>
<div class="a" style="left:0px;top:955px;width:12px;height:1px;background:#c3c3c3;"></div>
<div class="a" style="left:0px;top:975px;width:12px;height:1px;background:#c3c3c3;"></div>
<div class="a" style="left:13px;top:241px;width:1873px;height:75px;background:#5d8aa8;"></div>
<div class="a" style="left:0;top:0;width:1885px;height:300px;overflow:hidden">
<div class="a" style="left:11px;top:239px;width:1880px;height:28px;border:2px solid #106b3a"></div>
<div class="a" style="left:13px;top:241px;width:1880px;height:24px;border:1px solid #fff"></div>
</div>
<div class="t" style="left:15px;top:320px;font-size:13.0px;color:#000;font-weight:normal;transform:scaleX(1.0498);transform-origin:0 0;">Generated By:</div>
<div class="t" style="left:300px;top:320px;font-size:13.0px;color:#000;font-weight:normal;transform:scaleX(0.9435);transform-origin:0 0;">CHIKKA BORAIAH JC</div>
<div class="t" style="left:15px;top:340px;font-size:13.0px;color:#000;font-weight:normal;transform:scaleX(1.0583);transform-origin:0 0;">Generated On:</div>
<div class="t" style="left:479px;top:340px;font-size:13.0px;color:#000;font-weight:normal;transform:scaleX(0.9934);transform-origin:0 0;">11-08-2025 12:48</div>
<div class="a" style="left:13px;top:395px;width:1873px;height:21px;background:#4f81bd;"></div>
<div class="a" style="left:13px;top:395px;width:1873px;height:1px;background:#789fcf;"></div>
<div class="a" style="left:13px;top:415px;width:1873px;height:1px;background:#95b3d7;"></div>
<div class="t" style="left:15px;top:400px;font-size:13.0px;color:#fff;font-weight:bold;transform:scaleX(1.0211);transform-origin:0 0;">SECTION</div>
<div class="a" style="left:280px;top:397px;width:17px;height:17px;background:linear-gradient(#fdfdfd,#e9edf2);border:1px solid #a8a8a8"></div>
<svg class="a" style="left:285px;top:404px;" width="8" height="5" viewBox="0 0 8 5"><path d="M0 0h7.2l-3.6 4z" fill="#5a5a5a"/></svg>
<div class="t" style="left:300px;top:400px;font-size:13.0px;color:#fff;font-weight:bold;transform:scaleX(0.8835);transform-origin:0 0;">TYPE</div>
<div class="a" style="left:565px;top:397px;width:17px;height:17px;background:linear-gradient(#fdfdfd,#e9edf2);border:1px solid #a8a8a8"></div>
<svg class="a" style="left:570px;top:404px;" width="8" height="5" viewBox="0 0 8 5"><path d="M0 0h7.2l-3.6 4z" fill="#5a5a5a"/></svg>
<div class="t" style="left:585px;top:400px;font-size:13.0px;color:#fff;font-weight:bold;transform:scaleX(0.9620);transform-origin:0 0;">TOTAL_NO_OF_INST</div>
<div class="a" style="left:850px;top:397px;width:17px;height:17px;background:linear-gradient(#fdfdfd,#e9edf2);border:1px solid #a8a8a8"></div>
<svg class="a" style="left:855px;top:404px;" width="8" height="5" viewBox="0 0 8 5"><path d="M0 0h7.2l-3.6 4z" fill="#5a5a5a"/></svg>
<div class="t" style="left:870px;top:400px;font-size:13.0px;color:#fff;font-weight:bold;transform:scaleX(0.8815);transform-origin:0 0;">TOBEBILLED</div>
<div class="a" style="left:1135px;top:397px;width:17px;height:17px;background:linear-gradient(#fdfdfd,#e9edf2);border:1px solid #a8a8a8"></div>
<svg class="a" style="left:1140px;top:404px;" width="8" height="5" viewBox="0 0 8 5"><path d="M0 0h7.2l-3.6 4z" fill="#5a5a5a"/></svg>
<div class="t" style="left:1155px;top:400px;font-size:13.0px;color:#fff;font-weight:bold;transform:scaleX(0.8948);transform-origin:0 0;">BILLED</div>
<div class="a" style="left:1420px;top:397px;width:17px;height:17px;background:linear-gradient(#fdfdfd,#e9edf2);border:1px solid #a8a8a8"></div>
<svg class="a" style="left:1425px;top:404px;" width="8" height="5" viewBox="0 0 8 5"><path d="M0 0h7.2l-3.6 4z" fill="#5a5a5a"/></svg>
<div class="t" style="left:1440px;top:400px;font-size:13.0px;color:#fff;font-weight:bold;transform:scaleX(0.9008);transform-origin:0 0;">NOTBILLED</div>
<div class="a" style="left:1705px;top:397px;width:17px;height:17px;background:linear-gradient(#fdfdfd,#e9edf2);border:1px solid #a8a8a8"></div>
<svg class="a" style="left:1710px;top:404px;" width="8" height="5" viewBox="0 0 8 5"><path d="M0 0h7.2l-3.6 4z" fill="#5a5a5a"/></svg>
<div class="t" style="left:1725px;top:400px;font-size:13.0px;color:#fff;font-weight:bold;transform:scaleX(1.1484);transform-origin:0 0;">MNR</div>
<div class="a" style="left:13px;top:416px;width:1873px;height:19px;background:#dce6f1;"></div>
<div class="a" style="left:13px;top:435px;width:1873px;height:1px;background:#95b3d7;"></div>
<div class="t" style="left:15px;top:420px;font-size:13.0px;color:#000;font-weight:normal;transform:scaleX(0.9797);transform-origin:0 0;">RAMANAGARA URBAN</div>
<div class="t" style="left:300px;top:420px;font-size:13.0px;color:#000;font-weight:normal;">HT2A</div>
<div class="t" style="left:851.5652099336592px;top:420px;font-size:13.0px;color:#000;font-weight:normal;transform:scaleX(0.9292);transform-origin:0 0;">10</div>
<div class="t" style="left:1143.2826049668297px;top:420px;font-size:13.0px;color:#000;font-weight:normal;transform:scaleX(0.9292);transform-origin:0 0;">8</div>
<div class="t" style="left:1428.2826049668297px;top:420px;font-size:13.0px;color:#000;font-weight:normal;transform:scaleX(0.9292);transform-origin:0 0;">8</div>
<div class="t" style="left:1713.2826049668297px;top:420px;font-size:13.0px;color:#000;font-weight:normal;transform:scaleX(0.9292);transform-origin:0 0;">0</div>
<div class="a" style="left:13px;top:455px;width:1873px;height:1px;background:#95b3d7;"></div>
<div class="t" style="left:15px;top:440px;font-size:13.0px;color:#000;font-weight:normal;transform:scaleX(0.9797);transform-origin:0 0;">RAMANAGARA URBAN</div>
<div class="t" style="left:300px;top:440px;font-size:13.0px;color:#000;font-weight:normal;">HT2B</div>
<div class="t" style="left:858.2826049668296px;top:440px;font-size:13.0px;color:#000;font-weight:normal;transform:scaleX(0.9292);transform-origin:0 0;">4</div>
<div class="t" style="left:1143.2826049668297px;top:440px;font-size:13.0px;color:#000;font-weight:normal;transform:scaleX(0.9292);transform-origin:0 0;">3</div>
<div class="t" style="left:1428.2826049668297px;top:440px;font-size:13.0px;color:#000;font-weight:normal;transform:scaleX(0.9292);transform-origin:0 0;">3</div>
<div class="t" style="left:1713.2826049668297px;top:440px;font-size:13.0px;color:#000;font-weight:normal;transform:scaleX(0.9292);transform-origin:0 0;">0</div>
<div class="a" style="left:13px;top:456px;width:1873px;height:19px;background:#dce6f1;"></div>
<div class="a" style="left:13px;top:475px;width:1873px;height:1px;background:#95b3d7;"></div>
<div class="t" style="left:15px;top:460px;font-size:13.0px;color:#000;font-weight:normal;transform:scaleX(0.9797);transform-origin:0 0;">RAMANAGARA URBAN</div>
<div class="t" style="left:300px;top:460px;font-size:13.0px;color:#000;font-weight:normal;">HT2C</div>
<div class="t" style="left:858.2826049668296px;top:460px;font-size:13.0px;color:#000;font-weight:normal;transform:scaleX(0.9292);transform-origin:0 0;">1</div>
<div class="t" style="left:1143.2826049668297px;top:460px;font-size:13.0px;color:#000;font-weight:normal;transform:scaleX(0.9292);transform-origin:0 0;">1</div>
<div class="t" style="left:1428.2826049668297px;top:460px;font-size:13.0px;color:#000;font-weight:normal;transform:scaleX(0.9292);transform-origin:0 0;">1</div>
<div class="t" style="left:1713.2826049668297px;top:460px;font-size:13.0px;color:#000;font-weight:normal;transform:scaleX(0.9292);transform-origin:0 0;">0</div>
<div class="a" style="left:13px;top:495px;width:1873px;height:1px;background:#95b3d7;"></div>
<div class="t" style="left:15px;top:480px;font-size:13.0px;color:#000;font-weight:normal;transform:scaleX(0.9797);transform-origin:0 0;">RAMANAGARA URBAN</div>
<div class="t" style="left:300px;top:480px;font-size:13.0px;color:#000;font-weight:normal;">LT1</div>
<div class="t" style="left:838.1304198673184px;top:480px;font-size:13.0px;color:#000;font-weight:normal;transform:scaleX(0.9292);transform-origin:0 0;">3554</div>
<div class="t" style="left:1123.1304198673183px;top:480px;font-size:13.0px;color:#000;font-weight:normal;transform:scaleX(0.9292);transform-origin:0 0;">3067</div>
<div class="t" style="left:1408.1304198673183px;top:480px;font-size:13.0px;color:#000;font-weight:normal;transform:scaleX(0.9292);transform-origin:0 0;">3066</div>
<div class="t" style="left:1713.2826049668297px;top:480px;font-size:13.0px;color:#000;font-weight:normal;transform:scaleX(0.9292);transform-origin:0 0;">1</div>
<div class="a" style="left:13px;top:496px;width:1873px;height:19px;background:#dce6f1;"></div>
<div class="a" style="left:13px;top:515px;width:1873px;height:1px;background:#95b3d7;"></div>
<div class="t" style="left:15px;top:500px;font-size:13.0px;color:#000;font-weight:normal;transform:scaleX(0.9797);transform-origin:0 0;">RAMANAGARA URBAN</div>
<div class="t" style="left:300px;top:500px;font-size:13.0px;color:#000;font-weight:normal;">LT2</div>
<div class="t" style="left:851.5652099336592px;top:500px;font-size:13.0px;color:#000;font-weight:normal;transform:scaleX(0.9292);transform-origin:0 0;">10</div>
<div class="t" style="left:1143.2826049668297px;top:500px;font-size:13.0px;color:#000;font-weight:normal;transform:scaleX(0.9292);transform-origin:0 0;">8</div>
<div class="t" style="left:1428.2826049668297px;top:500px;font-size:13.0px;color:#000;font-weight:normal;transform:scaleX(0.9292);transform-origin:0 0;">8</div>
<div class="t" style="left:1713.2826049668297px;top:500px;font-size:13.0px;color:#000;font-weight:normal;transform:scaleX(0.9292);transform-origin:0 0;">0</div>
<div class="a" style="left:13px;top:535px;width:1873px;height:1px;background:#95b3d7;"></div>
<div class="t" style="left:15px;top:520px;font-size:13.0px;color:#000;font-weight:normal;transform:scaleX(0.9797);transform-origin:0 0;">RAMANAGARA URBAN</div>
<div class="t" style="left:300px;top:520px;font-size:13.0px;color:#000;font-weight:normal;">LT3A</div>
<div class="t" style="left:844.8478149004889px;top:520px;font-size:13.0px;color:#000;font-weight:normal;transform:scaleX(0.9292);transform-origin:0 0;">332</div>
<div class="t" style="left:1129.8478149004889px;top:520px;font-size:13.0px;color:#000;font-weight:normal;transform:scaleX(0.9292);transform-origin:0 0;">272</div>
<div class="t" style="left:1414.8478149004889px;top:520px;font-size:13.0px;color:#000;font-weight:normal;transform:scaleX(0.9292);transform-origin:0 0;">272</div>
<div class="t" style="left:1713.2826049668297px;top:520px;font-size:13.0px;color:#000;font-weight:normal;transform:scaleX(0.9292);transform-origin:0 0;">0</div>
<div class="a" style="left:13px;top:536px;width:1873px;height:19px;background:#dce6f1;"></div>
<div class="a" style="left:13px;top:555px;width:1873px;height:1px;background:#95b3d7;"></div>
<div class="t" style="left:15px;top:540px;font-size:13.0px;color:#000;font-weight:normal;transform:scaleX(0.9797);transform-origin:0 0;">RAMANAGARA URBAN</div>
<div class="t" style="left:300px;top:540px;font-size:13.0px;color:#000;font-weight:normal;">LT4</div>
<div class="t" style="left:844.8478149004889px;top:540px;font-size:13.0px;color:#000;font-weight:normal;transform:scaleX(0.9292);transform-origin:0 0;">578</div>
<div class="t" style="left:1129.8478149004889px;top:540px;font-size:13.0px;color:#000;font-weight:normal;transform:scaleX(0.9292);transform-origin:0 0;">552</div>
<div class="t" style="left:1414.8478149004889px;top:540px;font-size:13.0px;color:#000;font-weight:normal;transform:scaleX(0.9292);transform-origin:0 0;">552</div>
<div class="t" style="left:1713.2826049668297px;top:540px;font-size:13.0px;color:#000;font-weight:normal;transform:scaleX(0.9292);transform-origin:0 0;">0</div>
<div class="a" style="left:13px;top:575px;width:1873px;height:1px;background:#95b3d7;"></div>
<div class="t" style="left:15px;top:560px;font-size:13.0px;color:#000;font-weight:normal;transform:scaleX(0.9797);transform-origin:0 0;">RAMANAGARA URBAN</div>
<div class="t" style="left:300px;top:560px;font-size:13.0px;color:#000;font-weight:normal;">LT4C(I)</div>
<div class="t" style="left:858.2826049668296px;top:560px;font-size:13.0px;color:#000;font-weight:normal;transform:scaleX(0.9292);transform-origin:0 0;">2</div>
<div class="t" style="left:1143.2826049668297px;top:560px;font-size:13.0px;color:#000;font-weight:normal;transform:scaleX(0.9292);transform-origin:0 0;">2</div>
<div class="t" style="left:1428.2826049668297px;top:560px;font-size:13.0px;color:#000;font-weight:normal;transform:scaleX(0.9292);transform-origin:0 0;">2</div>
<div class="t" style="left:1713.2826049668297px;top:560px;font-size:13.0px;color:#000;font-weight:normal;transform:scaleX(0.9292);transform-origin:0 0;">0</div>
<div class="a" style="left:13px;top:576px;width:1873px;height:19px;background:#dce6f1;"></div>
<div class="a" style="left:13px;top:595px;width:1873px;height:1px;background:#95b3d7;"></div>
<div class="t" style="left:15px;top:580px;font-size:13.0px;color:#000;font-weight:normal;transform:scaleX(0.9797);transform-origin:0 0;">RAMANAGARA URBAN</div>
<div class="t" style="left:300px;top:580px;font-size:13.0px;color:#000;font-weight:normal;">LT5</div>
<div class="t" style="left:844.8478149004889px;top:580px;font-size:13.0px;color:#000;font-weight:normal;transform:scaleX(0.9292);transform-origin:0 0;">100</div>
<div class="t" style="left:1136.5652099336592px;top:580px;font-size:13.0px;color:#000;font-weight:normal;transform:scaleX(0.9292);transform-origin:0 0;">71</div>
<div class="t" style="left:1421.5652099336592px;top:580px;font-size:13.0px;color:#000;font-weight:normal;transform:scaleX(0.9292);transform-origin:0 0;">71</div>
<div class="t" style="left:1713.2826049668297px;top:580px;font-size:13.0px;color:#000;font-weight:normal;transform:scaleX(0.9292);transform-origin:0 0;">0</div>
<div class="a" style="left:13px;top:615px;width:1873px;height:1px;background:#95b3d7;"></div>
<div class="t" style="left:15px;top:600px;font-size:13.0px;color:#000;font-weight:normal;transform:scaleX(0.9797);transform-origin:0 0;">RAMANAGARA URBAN</div>
<div class="t" style="left:300px;top:600px;font-size:13.0px;color:#000;font-weight:normal;">LT6A</div>
<div class="t" style="left:851.5652099336592px;top:600px;font-size:13.0px;color:#000;font-weight:normal;transform:scaleX(0.9292);transform-origin:0 0;">64</div>
<div class="t" style="left:1136.5652099336592px;top:600px;font-size:13.0px;color:#000;font-weight:normal;transform:scaleX(0.9292);transform-origin:0 0;">58</div>
<div class="t" style="left:1421.5652099336592px;top:600px;font-size:13.0px;color:#000;font-weight:normal;transform:scaleX(0.9292);transform-origin:0 0;">58</div>
<div class="t" style="left:1713.2826049668297px;top:600px;font-size:13.0px;color:#000;font-weight:normal;transform:scaleX(0.9292);transform-origin:0 0;">0</div>
<div class="a" style="left:13px;top:616px;width:1873px;height:19px;background:#dce6f1;"></div>
<div class="a" style="left:13px;top:635px;width:1873px;height:1px;background:#95b3d7;"></div>
<div class="t" style="left:15px;top:620px;font-size:13.0px;color:#000;font-weight:normal;transform:scaleX(0.9797);transform-origin:0 0;">RAMANAGARA URBAN</div>
<div class="t" style="left:300px;top:620px;font-size:13.0px;color:#000;font-weight:normal;">LT6B</div>
<div class="t" style="left:851.5652099336592px;top:620px;font-size:13.0px;color:#000;font-weight:normal;transform:scaleX(0.9292);transform-origin:0 0;">74</div>
<div class="t" style="left:1136.5652099336592px;top:620px;font-size:13.0px;color:#000;font-weight:normal;transform:scaleX(0.9292);transform-origin:0 0;">74</div>
<div class="t" style="left:1421.5652099336592px;top:620px;font-size:13.0px;color:#000;font-weight:normal;transform:scaleX(0.9292);transform-origin:0 0;">74</div>
<div class="t" style="left:1713.2826049668297px;top:620px;font-size:13.0px;color:#000;font-weight:normal;transform:scaleX(0.9292);transform-origin:0 0;">0</div>
<div class="a" style="left:13px;top:655px;width:1873px;height:1px;background:#95b3d7;"></div>
<div class="t" style="left:15px;top:640px;font-size:13.0px;color:#000;font-weight:normal;transform:scaleX(0.9797);transform-origin:0 0;">RAMANAGARA URBAN</div>
<div class="t" style="left:300px;top:640px;font-size:13.0px;color:#000;font-weight:normal;">LT6C</div>
<div class="t" style="left:858.2826049668296px;top:640px;font-size:13.0px;color:#000;font-weight:normal;transform:scaleX(0.9292);transform-origin:0 0;">1</div>
<div class="t" style="left:1143.2826049668297px;top:640px;font-size:13.0px;color:#000;font-weight:normal;transform:scaleX(0.9292);transform-origin:0 0;">1</div>
<div class="t" style="left:1428.2826049668297px;top:640px;font-size:13.0px;color:#000;font-weight:normal;transform:scaleX(0.9292);transform-origin:0 0;">1</div>
<div class="t" style="left:1713.2826049668297px;top:640px;font-size:13.0px;color:#000;font-weight:normal;transform:scaleX(0.9292);transform-origin:0 0;">0</div>
<div class="a" style="left:13px;top:656px;width:1873px;height:19px;background:#dce6f1;"></div>
<div class="a" style="left:13px;top:675px;width:1873px;height:1px;background:#95b3d7;"></div>
<div class="t" style="left:15px;top:660px;font-size:13.0px;color:#000;font-weight:normal;transform:scaleX(0.9797);transform-origin:0 0;">RAMANAGARA URBAN</div>
<div class="t" style="left:300px;top:660px;font-size:13.0px;color:#000;font-weight:normal;">LT7</div>
<div class="t" style="left:844.8478149004889px;top:660px;font-size:13.0px;color:#000;font-weight:normal;transform:scaleX(0.9292);transform-origin:0 0;">449</div>
<div class="t" style="left:1136.5652099336592px;top:660px;font-size:13.0px;color:#000;font-weight:normal;transform:scaleX(0.9292);transform-origin:0 0;">47</div>
<div class="t" style="left:1421.5652099336592px;top:660px;font-size:13.0px;color:#000;font-weight:normal;transform:scaleX(0.9292);transform-origin:0 0;">47</div>
<div class="t" style="left:1713.2826049668297px;top:660px;font-size:13.0px;color:#000;font-weight:normal;transform:scaleX(0.9292);transform-origin:0 0;">0</div>
<div class="a" style="left:13px;top:676px;width:1873px;height:40px;background:#b3bdb4;"></div>
<div class="t" style="left:15px;top:680px;font-size:13.0px;color:#000;font-weight:bold;transform:scaleX(0.9614);transform-origin:0 0;">Sub Total</div>
<div class="t" style="left:838.1304198673184px;top:680px;font-size:13.0px;color:#000;font-weight:bold;transform:scaleX(0.9292);transform-origin:0 0;">5179</div>
<div class="t" style="left:1123.1304198673183px;top:680px;font-size:13.0px;color:#000;font-weight:bold;transform:scaleX(0.9292);transform-origin:0 0;">4164</div>
<div class="t" style="left:1408.1304198673183px;top:680px;font-size:13.0px;color:#000;font-weight:bold;transform:scaleX(0.9292);transform-origin:0 0;">4163</div>
<div class="t" style="left:1713.2826049668297px;top:680px;font-size:13.0px;color:#000;font-weight:bold;transform:scaleX(0.9292);transform-origin:0 0;">1</div>
<div class="t" style="left:15px;top:700px;font-size:13.0px;color:#000;font-weight:bold;transform:scaleX(1.0003);transform-origin:0 0;">Grand Total</div>
<div class="t" style="left:838.1304198673184px;top:700px;font-size:13.0px;color:#000;font-weight:bold;transform:scaleX(0.9292);transform-origin:0 0;">5179</div>
<div class="t" style="left:1123.1304198673183px;top:700px;font-size:13.0px;color:#000;font-weight:bold;transform:scaleX(0.9292);transform-origin:0 0;">4164</div>
<div class="t" style="left:1408.1304198673183px;top:700px;font-size:13.0px;color:#000;font-weight:bold;transform:scaleX(0.9292);transform-origin:0 0;">4163</div>
<div class="t" style="left:1713.2826049668297px;top:700px;font-size:13.0px;color:#000;font-weight:bold;transform:scaleX(0.9292);transform-origin:0 0;">1</div>
<div class="a" style="left:0;top:240px;width:12px;height:740px;overflow:hidden">
<div class="t" style="left:-3.8px;top:8px;font-size:12.55px;color:#1e6b40;font-weight:normal;transform:scaleX(1.0030);transform-origin:0 0;">1</div>
<div class="t" style="left:-3.8px;top:33px;font-size:12.55px;color:#262626;font-weight:normal;transform:scaleX(1.0030);transform-origin:0 0;">2</div>
<div class="t" style="left:-3.8px;top:58px;font-size:12.55px;color:#262626;font-weight:normal;transform:scaleX(1.0030);transform-origin:0 0;">3</div>
<div class="t" style="left:-3.8px;top:81px;font-size:12.55px;color:#262626;font-weight:normal;transform:scaleX(1.0030);transform-origin:0 0;">4</div>
<div class="t" style="left:-3.8px;top:101px;font-size:12.55px;color:#262626;font-weight:normal;transform:scaleX(1.0030);transform-origin:0 0;">5</div>
<div class="t" style="left:-3.8px;top:121px;font-size:12.55px;color:#262626;font-weight:normal;transform:scaleX(1.0030);transform-origin:0 0;">6</div>
<div class="t" style="left:-3.8px;top:141px;font-size:12.55px;color:#262626;font-weight:normal;transform:scaleX(1.0030);transform-origin:0 0;">7</div>
<div class="t" style="left:-3.8px;top:161px;font-size:12.55px;color:#262626;font-weight:normal;transform:scaleX(1.0030);transform-origin:0 0;">8</div>
<div class="t" style="left:-3.8px;top:181px;font-size:12.55px;color:#262626;font-weight:normal;transform:scaleX(1.0030);transform-origin:0 0;">9</div>
<div class="t" style="left:-7.3px;top:201px;font-size:12.55px;color:#262626;font-weight:normal;transform:scaleX(1.0030);transform-origin:0 0;">10</div>
<div class="t" style="left:-7.3px;top:221px;font-size:12.55px;color:#262626;font-weight:normal;transform:scaleX(1.0747);transform-origin:0 0;">11</div>
<div class="t" style="left:-7.3px;top:241px;font-size:12.55px;color:#262626;font-weight:normal;transform:scaleX(1.0030);transform-origin:0 0;">12</div>
<div class="t" style="left:-7.3px;top:261px;font-size:12.55px;color:#262626;font-weight:normal;transform:scaleX(1.0030);transform-origin:0 0;">13</div>
<div class="t" style="left:-7.3px;top:281px;font-size:12.55px;color:#262626;font-weight:normal;transform:scaleX(1.0030);transform-origin:0 0;">14</div>
<div class="t" style="left:-7.3px;top:301px;font-size:12.55px;color:#262626;font-weight:normal;transform:scaleX(1.0030);transform-origin:0 0;">15</div>
<div class="t" style="left:-7.3px;top:321px;font-size:12.55px;color:#262626;font-weight:normal;transform:scaleX(1.0030);transform-origin:0 0;">16</div>
<div class="t" style="left:-7.3px;top:341px;font-size:12.55px;color:#262626;font-weight:normal;transform:scaleX(1.0030);transform-origin:0 0;">17</div>
<div class="t" style="left:-7.3px;top:361px;font-size:12.55px;color:#262626;font-weight:normal;transform:scaleX(1.0030);transform-origin:0 0;">18</div>
<div class="t" style="left:-7.3px;top:381px;font-size:12.55px;color:#262626;font-weight:normal;transform:scaleX(1.0030);transform-origin:0 0;">19</div>
<div class="t" style="left:-7.3px;top:401px;font-size:12.55px;color:#262626;font-weight:normal;transform:scaleX(1.0030);transform-origin:0 0;">20</div>
<div class="t" style="left:-7.3px;top:421px;font-size:12.55px;color:#262626;font-weight:normal;transform:scaleX(1.0030);transform-origin:0 0;">21</div>
<div class="t" style="left:-7.3px;top:441px;font-size:12.55px;color:#262626;font-weight:normal;transform:scaleX(1.0030);transform-origin:0 0;">22</div>
<div class="t" style="left:-7.3px;top:461px;font-size:12.55px;color:#262626;font-weight:normal;transform:scaleX(1.0030);transform-origin:0 0;">23</div>
<div class="t" style="left:-7.3px;top:481px;font-size:12.55px;color:#262626;font-weight:normal;transform:scaleX(1.0030);transform-origin:0 0;">24</div>
<div class="t" style="left:-7.3px;top:501px;font-size:12.55px;color:#262626;font-weight:normal;transform:scaleX(1.0030);transform-origin:0 0;">25</div>
<div class="t" style="left:-7.3px;top:521px;font-size:12.55px;color:#262626;font-weight:normal;transform:scaleX(1.0030);transform-origin:0 0;">26</div>
<div class="t" style="left:-7.3px;top:541px;font-size:12.55px;color:#262626;font-weight:normal;transform:scaleX(1.0030);transform-origin:0 0;">27</div>
<div class="t" style="left:-7.3px;top:561px;font-size:12.55px;color:#262626;font-weight:normal;transform:scaleX(1.0030);transform-origin:0 0;">28</div>
<div class="t" style="left:-7.3px;top:581px;font-size:12.55px;color:#262626;font-weight:normal;transform:scaleX(1.0030);transform-origin:0 0;">29</div>
<div class="t" style="left:-7.3px;top:601px;font-size:12.55px;color:#262626;font-weight:normal;transform:scaleX(1.0030);transform-origin:0 0;">30</div>
<div class="t" style="left:-7.3px;top:621px;font-size:12.55px;color:#262626;font-weight:normal;transform:scaleX(1.0030);transform-origin:0 0;">31</div>
<div class="t" style="left:-7.3px;top:641px;font-size:12.55px;color:#262626;font-weight:normal;transform:scaleX(1.0030);transform-origin:0 0;">32</div>
<div class="t" style="left:-7.3px;top:661px;font-size:12.55px;color:#262626;font-weight:normal;transform:scaleX(1.0030);transform-origin:0 0;">33</div>
<div class="t" style="left:-7.3px;top:681px;font-size:12.55px;color:#262626;font-weight:normal;transform:scaleX(1.0030);transform-origin:0 0;">34</div>
<div class="t" style="left:-7.3px;top:701px;font-size:12.55px;color:#262626;font-weight:normal;transform:scaleX(1.0030);transform-origin:0 0;">35</div>
<div class="t" style="left:-7.3px;top:721px;font-size:12.55px;color:#262626;font-weight:normal;transform:scaleX(1.0030);transform-origin:0 0;">36</div>
<div class="t" style="left:-7.3px;top:741px;font-size:12.55px;color:#262626;font-weight:normal;transform:scaleX(1.0030);transform-origin:0 0;">37</div>
</div>
<div class="a" style="left:1886px;top:221px;width:20px;height:759px;background:#e6e6e6;"></div>
<div class="a" style="left:1889px;top:223px;width:15px;height:15px;background:#fff;border:1px solid #a6a6a6"></div>
<svg class="a" style="left:1893px;top:228px;" width="7" height="4" viewBox="0 0 7 4"><path d="M0 4h7L3.5 0z" fill="#222"/></svg>
<div class="a" style="left:1889px;top:238px;width:15px;height:706px;background:#fff;border:1px solid #a6a6a6"></div>
<div class="a" style="left:1889px;top:944px;width:15px;height:22px;background:#f0f0f0;"></div>
<div class="a" style="left:1889px;top:966px;width:15px;height:14px;background:#fff;border:1px solid #a6a6a6"></div>
<svg class="a" style="left:1893px;top:971px;" width="7" height="4" viewBox="0 0 7 4"><path d="M0 0h7L3.5 4z" fill="#222"/></svg>
<div class="a" style="left:12px;top:979px;width:1874px;height:1px;background:#a6a6a6;"></div>
<div class="a" style="left:1885px;top:221px;width:1px;height:759px;background:#a6a6a6;"></div>
<div class="a" style="left:0px;top:980px;width:1906px;height:28px;background:#e6e6e6;"></div>
<div class="a" style="left:0px;top:980px;width:88px;height:1px;background:#a6a6a6;"></div>
<div class="a" style="left:150px;top:980px;width:1756px;height:1px;background:#a6a6a6;"></div>
<div class="a" style="left:87px;top:980px;width:64px;height:25px;background:#fff;border-left:1px solid #a6a6a6;border-right:1px solid #a6a6a6"></div>
<div class="a" style="left:88px;top:1003px;width:63px;height:2px;background:#107c41;"></div>
<div class="t" style="left:99px;top:989px;font-size:12.55px;color:#217346;font-weight:bold;transform:scaleX(0.9809);transform-origin:0 0;">sheet1</div>
<svg class="a" style="left:13px;top:989px;" width="5" height="9" viewBox="0 0 5 9"><path d="M4.5 0L0 4.5 4.5 9z" fill="#b4b4b4"/></svg>
<svg class="a" style="left:42px;top:989px;" width="5" height="9" viewBox="0 0 5 9"><path d="M0 0l4.5 4.5L0 9z" fill="#b4b4b4"/></svg>
<svg class="a" style="left:183px;top:985px;" width="17" height="17" viewBox="0 0 17 17"><circle cx="8.5" cy="8.5" r="7.5" fill="none" stroke="#777" stroke-width="1.2"/><path d="M8.5 4.5v8 M4.5 8.5h8" stroke="#777" stroke-width="1.6"/></svg>
<div class="a" style="left:1139px;top:990px;width:1.5px;height:1.5px;background:#999;"></div>
<div class="a" style="left:1139px;top:994px;width:1.5px;height:1.5px;background:#999;"></div>
<div class="a" style="left:1139px;top:998px;width:1.5px;height:1.5px;background:#999;"></div>
<div class="a" style="left:1157px;top:987px;width:729px;height:15px;background:#f0f0f0;"></div>
<div class="a" style="left:1156px;top:987px;width:16px;height:15px;background:#fff;border:1px solid #a6a6a6"></div>
<svg class="a" style="left:1161px;top:991px;" width="4" height="7" viewBox="0 0 4 7"><path d="M4 0v7L0 3.5z" fill="#222"/></svg>
<div class="a" style="left:1171px;top:987px;width:233px;height:15px;background:#fff;border:1px solid #a6a6a6"></div>
<div class="a" style="left:1871px;top:987px;width:15px;height:15px;background:#fff;border:1px solid #a6a6a6"></div>
<svg class="a" style="left:1876px;top:991px;" width="4" height="7" viewBox="0 0 4 7"><path d="M0 0v7l4-3.5z" fill="#222"/></svg>
<div class="a" style="left:0px;top:1008px;width:1906px;height:22px;background:#f3f3f3;"></div>
<div class="a" style="left:0px;top:1008px;width:1906px;height:1px;background:#d4d4d4;"></div>
<div class="t" style="left:0px;top:1015px;font-size:11.85px;color:#262626;font-weight:normal;transform:scaleX(0.9316);transform-origin:0 0;">Select destination and press ENTER or choose Paste</div>
<div class="a" style="left:1607px;top:1009px;width:40px;height:21px;background:#c8c8c8;"></div>
<svg class="a" style="left:1620px;top:1012px;" width="13" height="13" viewBox="0 0 13 13"><rect x="0" y="0" width="13" height="13" fill="#666"/><path d="M1 1h2v2H1z M4.5 1h2v2h-2z M8 1h2v2H8z M11 1h1v2h-1z M1 4.5h2v2H1z M4.5 4.5h2v2h-2z M8 4.5h2v2H8z M11 4.5h1v2h-1z M1 8h2v2H1z M4.5 8h2v2h-2z M8 8h2v2H8z M11 8h1v2h-1z M1 11h2v1H1z M4.5 11h2v1h-2z M8 11h2v1H8z M11 11h1v1h-1z" fill="#c8c8c8"/></svg>
<svg class="a" style="left:1660px;top:1012px;" width="15" height="14" viewBox="0 0 15 14"><path d="M0.5 0.5h14v13h-14z M3.5 2.5h8v9h-8z M5 5h5 M5 7h5 M5 9h5" fill="none" stroke="#555" stroke-width="1"/></svg>
<svg class="a" style="left:1700px;top:1012px;" width="15" height="14" viewBox="0 0 15 14"><path d="M0.5 0.5h14v13h-14z M4.5 0.5v6.5 M8.5 0.5v6.5 M4.5 6.5h10" fill="none" stroke="#555" stroke-width="1"/></svg>
<div class="a" style="left:1733px;top:1018px;width:8px;height:1px;background:#444;"></div>
<div class="a" style="left:1746px;top:1019px;width:99px;height:1px;background:#444;"></div>
<div class="a" style="left:1793px;top:1014px;width:6px;height:11px;background:#444;"></div>
<div class="a" style="left:1851px;top:1018px;width:8px;height:1px;background:#444;"></div>
<div class="a" style="left:1854.5px;top:1014.5px;width:1px;height:8px;background:#444;"></div>
<div class="t" style="left:1872.5px;top:1014px;font-size:11.15px;color:#444;font-weight:normal;transform:scaleX(0.9048);transform-origin:0 0;">100%</div>
<div class="a" style="left:0px;top:1030px;width:1906px;height:42px;background:#dbdcdf;"></div>
<div class="a" style="left:0px;top:1030px;width:1906px;height:1px;background:#c9ccd2;"></div>
<svg class="a" style="left:7px;top:1040px;" width="26" height="26" viewBox="0 0 26 26"><defs><linearGradient id="sun" x1="0" y1="0" x2="1" y2="1"><stop offset="0" stop-color="#ffc83d"/><stop offset="1" stop-color="#f7700f"/></linearGradient><linearGradient id="cld" x1="0" y1="0" x2="0" y2="1"><stop offset="0" stop-color="#c9e3fb"/><stop offset="1" stop-color="#8fb9ea"/></linearGradient></defs><circle cx="11" cy="13" r="10" fill="url(#sun)"/><path d="M5 25a4.5 4.5 0 0 1 1-8.8a6 6 0 0 1 11.5-1.2a5 5 0 0 1 5.5 5a4.5 4.5 0 0 1-1 5z" fill="url(#cld)"/></svg>
<svg class="a" style="left:17px;top:1036px;" width="16" height="16" viewBox="0 0 16 16"><circle cx="8" cy="8" r="7.8" fill="#c42b1c"/></svg>
<div class="t" style="left:21.3px;top:1040px;font-size:9.8px;color:#fff;font-weight:normal;transform:scaleX(0.9542);transform-origin:0 0;">4</div>
<div class="t" style="left:37.8px;top:1040px;font-size:11.75px;color:#1a1a1a;font-weight:normal;transform:scaleX(0.9218);transform-origin:0 0;">26°C</div>
<div class="t" style="left:37.5px;top:1056px;font-size:11.75px;color:#444;font-weight:normal;transform:scaleX(0.9977);transform-origin:0 0;">Partly sunny</div>
<svg class="a" style="left:648px;top:1043px;" width="23" height="23" viewBox="0 0 23 23"><defs><linearGradient id="win" x1="0" y1="0" x2="1" y2="1"><stop offset="0" stop-color="#3ccbf4"/><stop offset="1" stop-color="#0b6fd0"/></linearGradient></defs><rect x="0" y="0" width="10.8" height="10.8" rx="1" fill="url(#win)"/><rect x="12" y="0" width="10.8" height="10.8" rx="1" fill="url(#win)"/><rect x="0" y="12" width="10.8" height="10.8" rx="1" fill="url(#win)"/><rect x="12" y="12" width="10.8" height="10.8" rx="1" fill="url(#win)"/></svg>
<div class="a" style="left:685px;top:1039px;width:218px;height:30px;background:#f2f2f2;border:1px solid #cfd1d6;border-radius:15px"></div>
<svg class="a" style="left:696px;top:1047px;" width="15" height="15" viewBox="0 0 15 15"><circle cx="6" cy="6" r="5" fill="none" stroke="#1a1a1a" stroke-width="1.6"/><path d="M9.8 9.8l3.8 3.8" stroke="#1a1a1a" stroke-width="1.8"/></svg>
<div class="t" style="left:721.4px;top:1049px;font-size:12.0px;color:#5a5a5a;font-weight:normal;transform:scaleX(1.0416);transform-origin:0 0;">Search</div>
<svg class="a" style="left:845px;top:1036px;" width="60" height="34" viewBox="0 0 60 34"><path d="M10 28C13 18 19 10 27.5 7C25 14 20 21 13 25z" fill="#b98a5e"/><path d="M10.5 28.5L22 13" stroke="#e9d6c0" stroke-width="0.6"/><path d="M10 28.2l3-3.5" stroke="#3a55b8" stroke-width="1.4"/><path d="M19 19h2.5v2h1.2l1.5 2.5v4.5h-7.5v-4.5l1.3-2.5h1z" fill="#5b5fb8"/><rect x="19" y="18" width="2.6" height="2" fill="#d9b27a"/><rect x="30.2" y="11.0" width="4.2" height="17.0" fill="#d9772b"/><rect x="30.2" y="12.0" width="4.2" height="1.2" fill="#f2cf4a"/><rect x="30.2" y="26.0" width="4.2" height="1.2" fill="#f2cf4a"/><rect x="34.4" y="8.7" width="4.4" height="19.3" fill="#c9442a"/><rect x="34.4" y="9.7" width="4.4" height="1.2" fill="#f2cf4a"/><rect x="34.4" y="26.0" width="4.4" height="1.2" fill="#f2cf4a"/><rect x="38.8" y="11.0" width="3.2" height="17.0" fill="#3b8a4a"/><rect x="38.8" y="12.0" width="3.2" height="1.2" fill="#f2cf4a"/><rect x="38.8" y="26.0" width="3.2" height="1.2" fill="#f2cf4a"/><rect x="42.0" y="12.0" width="3.6" height="16.0" fill="#e3a53a"/><rect x="42.0" y="13.0" width="3.6" height="1.2" fill="#f2cf4a"/><rect x="42.0" y="26.0" width="3.6" height="1.2" fill="#f2cf4a"/><rect x="45.6" y="14.2" width="4.2" height="13.8" fill="#2a7f8a"/><rect x="45.6" y="15.2" width="4.2" height="1.2" fill="#f2cf4a"/><rect x="45.6" y="26.0" width="4.2" height="1.2" fill="#f2cf4a"/></svg>
<svg class="a" style="left:916px;top:1043px;" width="24" height="22" viewBox="0 0 24 22"><rect x="7" y="0" width="17" height="15" fill="#f8f8f8"/><rect x="0" y="6" width="17" height="16" fill="#1f1f1f"/><rect x="6.5" y="6" width="10.5" height="9" fill="#bdbdbd"/></svg>
<svg class="a" style="left:960px;top:1042px;" width="25" height="23" viewBox="0 0 25 23"><defs><linearGradient id="cp1" x1="0" y1="0" x2="0" y2="1"><stop offset="0" stop-color="#12a6f5"/><stop offset="0.5" stop-color="#2ea36a"/><stop offset="1" stop-color="#ffcc00"/></linearGradient><linearGradient id="cp2" x1="0" y1="0" x2="0" y2="1"><stop offset="0" stop-color="#a94ae6"/><stop offset="0.55" stop-color="#f25c8c"/><stop offset="1" stop-color="#ffa24a"/></linearGradient></defs><path d="M6.5 1H17c1.8 0 2.3 1 1.9 2.4L15.3 16.3c-0.4 1.3-1.2 1.7-2.5 1.7H2.3c-1.8 0-2.3-1-1.9-2.4L4 2.7C4.4 1.4 5.2 1 6.5 1z" fill="url(#cp1)"/><path d="M12 7h10.5c1.8 0 2.3 1 1.9 2.4L20.8 20.3c-0.4 1.3-1.2 1.7-2.5 1.7H7.8c-1.8 0-2.3-1-1.9-2.4L9.5 8.7C9.9 7.4 10.7 7 12 7z" fill="url(#cp2)"/><path d="M13.5 1H17c1.8 0 2.3 1 1.9 2.4L18 7h-6c-1 0-1.8 0.4-2.2 1.4z" fill="#1a5fd8"/><path d="M11 22H7.8c-1.8 0-2.3-1-1.9-2.4L7 16h5.8c1.3 0 2.1-0.4 2.5-1.7z" fill="#f5532a"/></svg>
<svg class="a" style="left:1004px;top:1042px;" width="25" height="24" viewBox="0 0 25 24"><circle cx="12.6" cy="4.2" r="3.3" fill="#7b83eb"/><circle cx="19.7" cy="5.8" r="2.3" fill="#5059c9"/><path d="M17.5 9.5h5.5c0.6 0 1 0.4 1 1v5.5a3.2 3.2 0 0 1-6.5 0z" fill="#5059c9"/><path d="M6.5 9h11c0.6 0 1 0.4 1 1v7.5a6 6 0 0 1-12 0z" fill="#7b83eb"/><rect x="0" y="6" width="11.6" height="11.8" rx="1" fill="#4b53bc"/><path d="M2.8 8.8h6 M5.8 8.8v6.6" stroke="#fff" stroke-width="1.7"/></svg>
<svg class="a" style="left:1048px;top:1043px;" width="24" height="22" viewBox="0 0 24 22"><path d="M0 2a2 2 0 0 1 2-2h7l2 2h11a2 2 0 0 1 2 2v16a2 2 0 0 1-2 2H2a2 2 0 0 1-2-2z" fill="#f0b72a"/><rect x="0" y="4" width="24" height="18" rx="1.5" fill="#ffd25a"/><rect x="5" y="15" width="14" height="7" rx="1.5" fill="#3a87d8"/></svg>
<div class="a" style="left:1058px;top:1069px;width:5px;height:3px;background:#7a7a7a;border-radius:1.5px"></div>
<svg class="a" style="left:1092px;top:1042px;" width="24" height="24" viewBox="0 0 24 24"><defs><linearGradient id="ed1" x1="0" y1="1" x2="1" y2="0"><stop offset="0" stop-color="#0b63c5"/><stop offset="0.55" stop-color="#1ba0e2"/><stop offset="1" stop-color="#5fd35a"/></linearGradient><linearGradient id="ed2" x1="0" y1="0" x2="1" y2="1"><stop offset="0" stop-color="#0d5ab8"/><stop offset="1" stop-color="#1c4f9c"/></linearGradient></defs><circle cx="12" cy="12" r="11.9" fill="url(#ed1)"/><path d="M1 14c0-5 4-8.5 8.5-8.5c4 0 6.5 2.5 6.5 5c0 2-1.8 3-4 3c-1.5 0-3-0.4-3.5-1c-1.5 2.5 0.5 6 5 6.5c3 0.3 6-0.8 8-2.5C19.6 21.5 16 24 12 24C5.8 24 1 19.8 1 14z" fill="url(#ed2)"/><ellipse cx="13" cy="13.5" rx="3.2" ry="1.6" fill="#d8e6f2" opacity="0.9"/></svg>
<svg class="a" style="left:1136px;top:1043px;" width="23" height="23" viewBox="0 0 23 23"><path d="M7 5V3a2 2 0 0 1 2-2h5a2 2 0 0 1 2 2v2" fill="none" stroke="#3bb3f0" stroke-width="1.8"/><rect x="0" y="5" width="23" height="18" rx="2.5" fill="#1a4d8f"/><rect x="7" y="9" width="4" height="4" fill="#f25022"/><rect x="12" y="9" width="4" height="4" fill="#7fba00"/><rect x="7" y="14" width="4" height="4" fill="#00a4ef"/><rect x="12" y="14" width="4" height="4" fill="#ffb900"/></svg>
<svg class="a" style="left:1180px;top:1042px;" width="24" height="24" viewBox="0 0 24 24"><circle cx="12" cy="12" r="12" fill="#ea4335"/><path d="M12 12L22.4 6A12 12 0 0 1 12 24z" fill="#fbbc04"/><path d="M12 12L12 24A12 12 0 0 1 1.6 6z" fill="#34a853"/><circle cx="12" cy="12" r="5.6" fill="#fff"/><circle cx="12" cy="12" r="4.4" fill="#4285f4"/></svg>
<div class="a" style="left:1189px;top:1069px;width:5px;height:3px;background:#7a7a7a;border-radius:1.5px"></div>
<div class="a" style="left:1217px;top:1036px;width:34px;height:36px;background:#eef0f3;border-radius:4px;"></div>
<svg class="a" style="left:1224px;top:1043px;" width="25" height="22" viewBox="0 0 25 22"><rect x="6" y="0" width="19" height="22" rx="1.5" fill="#21a366"/><rect x="6" y="7" width="19" height="8" fill="#107c41"/><rect x="15" y="0" width="10" height="7" fill="#33c481"/><rect x="15" y="15" width="10" height="7" fill="#185c37"/><rect x="0" y="4" width="13" height="14" rx="1.5" fill="#107c41"/><path d="M3.5 7l6 8 M9.5 7l-6 8" stroke="#fff" stroke-width="1.7"/></svg>
<div class="a" style="left:1228px;top:1069px;width:16px;height:3px;background:#0067c0;border-radius:1.5px"></div>
<svg class="a" style="left:1664px;top:1051px;" width="11" height="7" viewBox="0 0 11 7"><path d="M0.5 6L5.5 1l5 5" fill="none" stroke="#1a1a1a" stroke-width="1.2"/></svg>
<svg class="a" style="left:1692px;top:1047px;" width="18" height="15" viewBox="0 0 18 15"><path d="M3 12a3 3 0 0 1 0-6a5 5 0 0 1 9.5-1.5a3.5 3.5 0 0 1 2.5 7.5z" fill="#cfcfcf" stroke="#1a1a1a" stroke-width="1.2"/><path d="M1 1l14 13" stroke="#1a1a1a" stroke-width="1.2"/></svg>
<div class="t" style="left:1727.6px;top:1042px;font-size:10.75px;color:#1a1a1a;font-weight:normal;transform:scaleX(0.9744);transform-origin:0 0;">ENG</div>
<div class="t" style="left:1733px;top:1058px;font-size:10.75px;color:#1a1a1a;font-weight:normal;transform:scaleX(1.0605);transform-origin:0 0;">IN</div>
<svg class="a" style="left:1769px;top:1046px;" width="17" height="16" viewBox="0 0 17 16"><path d="M0.5 0.5h11v10h-11z M3 14h7 M6.5 10.5v3.5" fill="none" stroke="#1a1a1a" stroke-width="1"/><rect x="12.5" y="0.5" width="3" height="5" rx="1.2" fill="#fff" stroke="#1a1a1a"/><path d="M14 5.5v10" stroke="#1a1a1a"/></svg>
<svg class="a" style="left:1793px;top:1048px;" width="17" height="13" viewBox="0 0 17 13"><path d="M0.5 4h3l4-3.5v12L3.5 9h-3z" fill="none" stroke="#1a1a1a" stroke-width="1"/><path d="M10 3.5a4 4 0 0 1 0 6 M12.5 1.5a7 7 0 0 1 0 10 M15 0a9.5 9.5 0 0 1 0 13" fill="none" stroke="#1a1a1a" stroke-width="1"/></svg>
<div class="t" style="left:1859.4px;top:1041px;font-size:11.15px;color:#1a1a1a;font-weight:normal;transform:scaleX(1.0144);transform-origin:0 0;">13:00</div>
<div class="t" style="left:1826.3px;top:1057px;font-size:11.15px;color:#1a1a1a;font-weight:normal;transform:scaleX(1.0925);transform-origin:0 0;">11-08-2025</div>
</body></html>
